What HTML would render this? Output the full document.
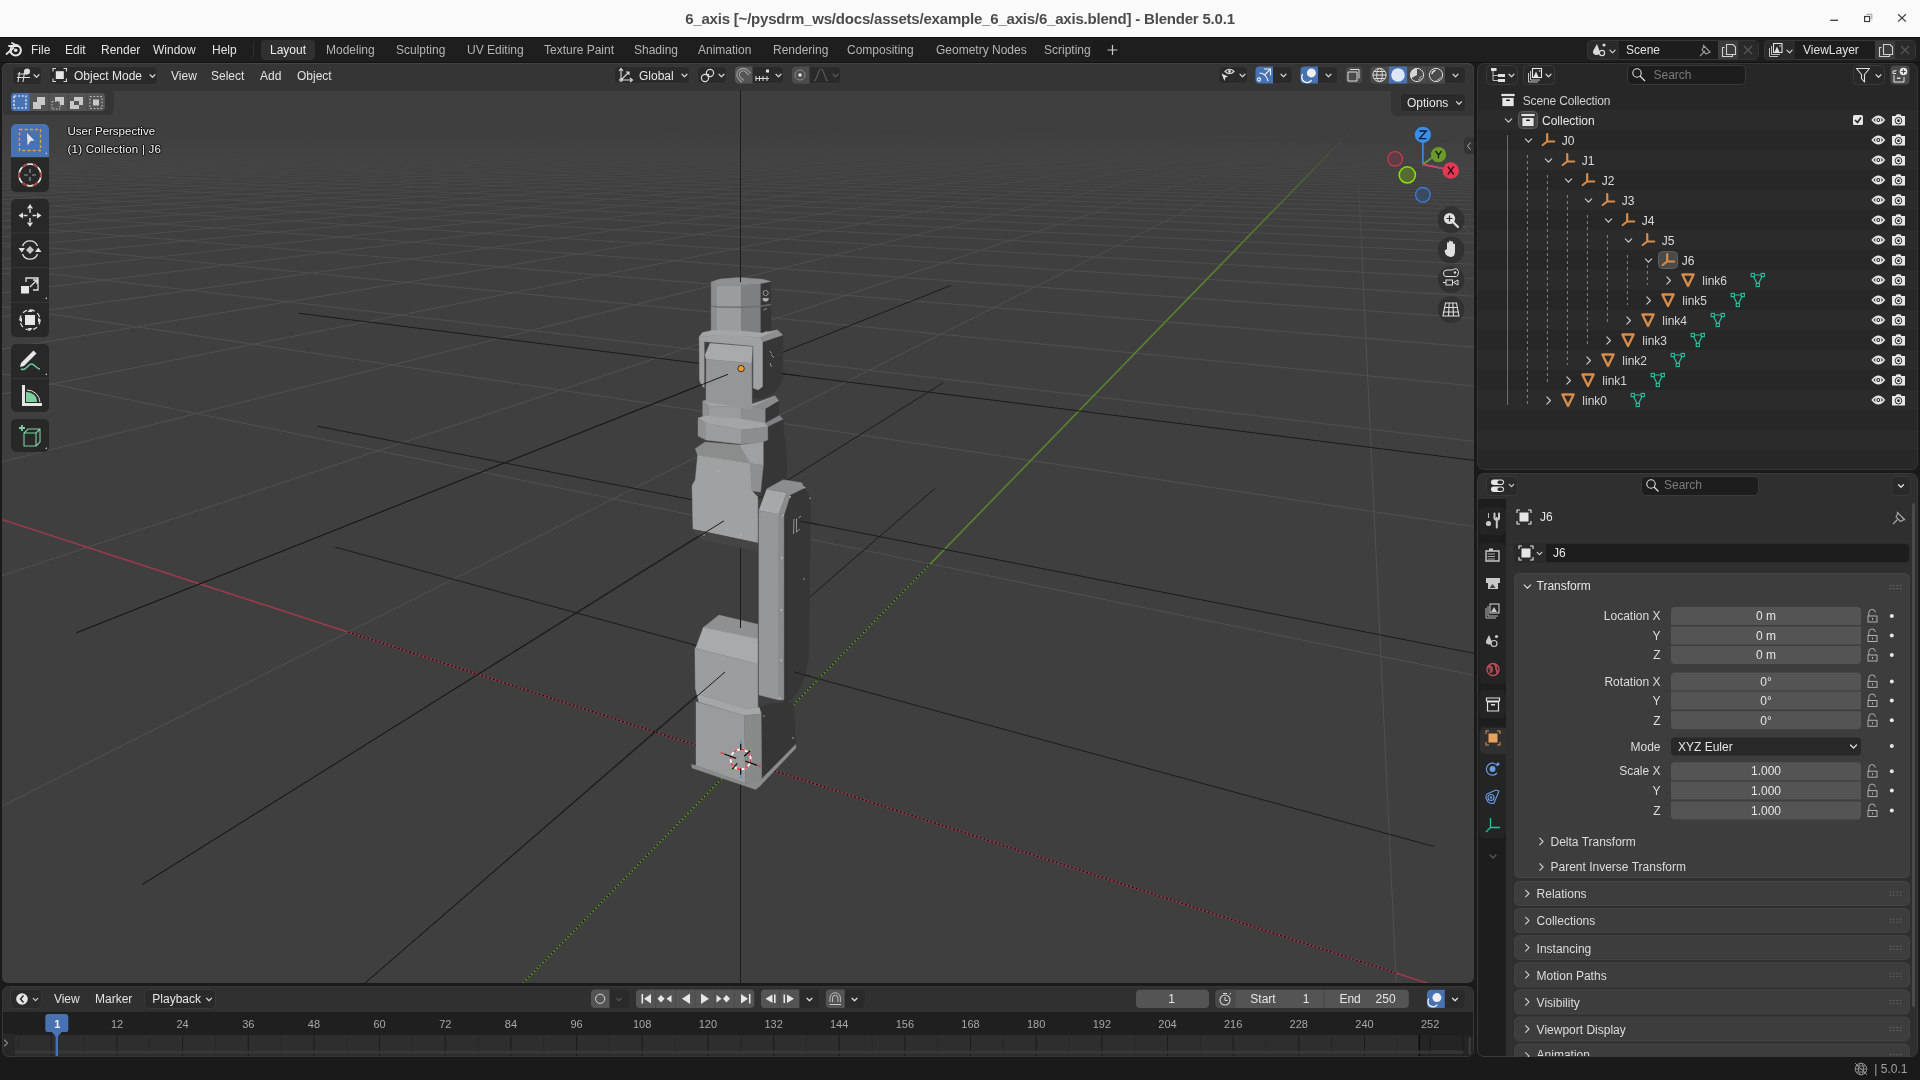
<!DOCTYPE html><html><head><meta charset="utf-8"><style>html,body{margin:0;padding:0;width:1920px;height:1080px;overflow:hidden;background:#1a1a1a;font-family:"Liberation Sans",sans-serif;}div{box-sizing:border-box}svg{display:block}</style></head><body><div style="position:absolute;left:0;top:0;width:1920px;height:1080px;overflow:hidden;will-change:transform">
<div style="position:absolute;left:0px;top:0px;width:1920px;height:37px;background:#fafafa;border-radius:0px;"></div>
<div style="position:absolute;left:0px;top:37px;width:1920px;height:1px;background:#0d0d0d;border-radius:0px;"></div>
<div style="position:absolute;left:560px;width:800px;top:10.30px;line-height:18px;font-size:15px;color:#4b4b4b;font-weight:bold;white-space:nowrap;text-align:center;letter-spacing:-0.2px">6_axis [~/pysdrm_ws/docs/assets/example_6_axis/6_axis.blend] - Blender 5.0.1</div>
<svg style="position:absolute;left:1820px;top:0px;overflow:visible;" width="100" height="37" viewBox="0 0 100 37"><path d="M10.2 20.3H18" stroke="#3c3c3c" stroke-width="1.3"/><rect x="44.6" y="16.5" width="5" height="5" fill="none" stroke="#3c3c3c" stroke-width="1.2"/><path d="M46.4 14.3H51.8V19.5" stroke="#9a9a9a" stroke-width="1" fill="none"/><path d="M78.1 14.3L85.9 21.6M85.9 14.3L78.1 21.6" stroke="#3c3c3c" stroke-width="1.2"/></svg>
<div style="position:absolute;left:0px;top:38px;width:1920px;height:24px;background:#1e1e1e;border-radius:0px;"></div>
<div style="position:absolute;left:0px;top:62px;width:1920px;height:1px;background:#121212;border-radius:0px;"></div>
<svg style="position:absolute;left:0px;top:0px;overflow:visible;" width="1920" height="1080" viewBox="0 0 1920 1080"><defs><clipPath id="vclip"><rect x="2" y="63" width="1472" height="920" rx="6"/></clipPath><linearGradient id="gfade" x1="0" y1="0" x2="0" y2="1080" gradientUnits="userSpaceOnUse"><stop offset="0.118" stop-color="#fff" stop-opacity="0"/><stop offset="0.139" stop-color="#fff" stop-opacity="0.2"/><stop offset="0.167" stop-color="#fff" stop-opacity="0.5"/><stop offset="0.2" stop-color="#fff" stop-opacity="0.75"/><stop offset="0.27" stop-color="#fff" stop-opacity="1"/></linearGradient><mask id="gmask" maskUnits="userSpaceOnUse" x="0" y="0" width="1920" height="1080"><rect x="0" y="0" width="1920" height="1080" fill="url(#gfade)"/></mask></defs><g clip-path="url(#vclip)"><rect x="2" y="63" width="1472" height="920" fill="#3f3f3f"/><g mask="url(#gmask)"><path d="M-1898306.6 23168.0L883.0 131.4M-6958.9 166.3L-3262370.2 23168.0M-1874840.6 23168.0L887.7 131.4M-6727.4 165.1L-3220720.4 23168.0M-1851374.6 23168.0L892.5 131.4M-6508.4 164.1L-3179070.5 23168.0M-1827908.5 23168.0L897.3 131.4M-6301.0 163.0L-3137420.7 23168.0M-1804442.5 23168.0L902.2 131.4M-6104.3 162.1L-3095770.8 23168.0M-1780976.5 23168.0L907.1 131.4M-5917.4 161.2L-3054121.0 23168.0M-1757510.5 23168.0L911.9 131.5M-5739.7 160.3L-3012471.2 23168.0M-1734044.4 23168.0L916.8 131.5M-5570.4 159.5L-2970821.3 23168.0M-1710578.4 23168.0L921.8 131.5M-5409.0 158.7L-2929171.5 23168.0M-1687112.4 23168.0L926.7 131.5M-5255.0 157.9L-2887521.6 23168.0M-1663646.3 23168.0L931.7 131.5M-5107.8 157.2L-2845871.8 23168.0M-1640180.3 23168.0L936.7 131.5M-4967.1 156.5L-2804222.0 23168.0M-1616714.3 23168.0L941.7 131.5M-4832.3 155.9L-2762572.1 23168.0M-1593248.2 23168.0L946.8 131.5M-4703.2 155.2L-2720922.3 23168.0M-1569782.2 23168.0L951.9 131.6M-4579.3 154.6L-2679272.4 23168.0M-1546316.2 23168.0L957.0 131.6M-4460.4 154.1L-2637622.6 23168.0M-1522850.1 23168.0L962.1 131.6M-4346.2 153.5L-2595972.8 23168.0M-1499384.1 23168.0L967.2 131.6M-4236.4 153.0L-2554322.9 23168.0M-1475918.1 23168.0L972.4 131.6M-4130.7 152.4L-2512673.1 23168.0M-1452452.0 23168.0L977.6 131.6M-4029.0 151.9L-2471023.2 23168.0M-1428986.0 23168.0L982.8 131.6M-3930.9 151.5L-2429373.4 23168.0M-1405520.0 23168.0L988.0 131.7M-3836.4 151.0L-2387723.6 23168.0M-1382053.9 23168.0L993.3 131.7M-3745.2 150.6L-2346073.7 23168.0M-1358587.9 23168.0L998.6 131.7M-3657.1 150.1L-2304423.9 23168.0M-1335121.9 23168.0L1003.9 131.7M-3572.0 149.7L-2262774.0 23168.0M-1311655.9 23168.0L1009.3 131.7M-3489.8 149.3L-2221124.2 23168.0M-1288189.8 23168.0L1014.6 131.7M-3410.2 148.9L-2179474.4 23168.0M-1264723.8 23168.0L1020.0 131.7M-3333.2 148.5L-2137824.5 23168.0M-1241257.8 23168.0L1025.5 131.8M-3258.7 148.2L-2096174.7 23168.0M-1217791.7 23168.0L1030.9 131.8M-3186.5 147.8L-2054524.8 23168.0M-1194325.7 23168.0L1036.4 131.8M-3116.6 147.5L-2012875.0 23168.0M-1170859.7 23168.0L1041.9 131.8M-3048.7 147.2L-1971225.2 23168.0M-1147393.6 23168.0L1047.4 131.8M-2982.9 146.8L-1929575.3 23168.0M-1123927.6 23168.0L1053.0 131.8M-2919.0 146.5L-1887925.5 23168.0M-1100461.6 23168.0L1058.6 131.9M-2857.0 146.2L-1846275.6 23168.0M-1076995.5 23168.0L1064.2 131.9M-2796.7 145.9L-1804625.8 23168.0M-1053529.5 23168.0L1069.8 131.9M-2738.2 145.6L-1762976.0 23168.0M-1030063.5 23168.0L1075.5 131.9M-2681.3 145.4L-1721326.1 23168.0M-1006597.4 23168.0L1081.2 131.9M-2625.9 145.1L-1679676.3 23168.0M-983131.4 23168.0L1086.9 131.9M-2572.0 144.8L-1638026.4 23168.0M-959665.4 23168.0L1092.7 131.9M-2519.6 144.6L-1596376.6 23168.0M-936199.4 23168.0L1098.4 132.0M-2468.5 144.3L-1554726.8 23168.0M-912733.3 23168.0L1104.3 132.0M-2418.8 144.1L-1513076.9 23168.0M-889267.3 23168.0L1110.1 132.0M-2370.4 143.8L-1471427.1 23168.0M-865801.3 23168.0L1116.0 132.0M-2323.2 143.6L-1429777.2 23168.0M-842335.2 23168.0L1121.9 132.0M-2277.1 143.4L-1388127.4 23168.0M-818869.2 23168.0L1127.8 132.0M-2232.2 143.2L-1346477.6 23168.0M-795403.2 23168.0L1133.8 132.1M-2188.4 143.0L-1304827.7 23168.0M-771937.1 23168.0L1139.8 132.1M-2145.7 142.7L-1263177.9 23168.0M-748471.1 23168.0L1145.8 132.1M-2104.0 142.5L-1221528.0 23168.0M-725005.1 23168.0L1151.8 132.1M-2063.2 142.3L-1179878.2 23168.0M-701539.0 23168.0L1157.9 132.1M-2023.4 142.1L-1138228.4 23168.0M-678073.0 23168.0L1164.0 132.1M-1984.5 142.0L-1096578.5 23168.0M-654607.0 23168.0L1170.2 132.2M-1946.6 141.8L-1054928.7 23168.0M-631140.9 23168.0L1176.4 132.2M-1909.4 141.6L-1013278.8 23168.0M-607674.9 23168.0L1182.6 132.2M-1873.1 141.4L-971629.0 23168.0M-584208.9 23168.0L1188.8 132.2M-1837.6 141.2L-929979.2 23168.0M-560742.8 23168.0L1195.1 132.2M-1802.8 141.1L-888329.3 23168.0M-537276.8 23168.0L1201.4 132.2M-1768.9 140.9L-846679.5 23168.0M-513810.8 23168.0L1207.7 132.3M-1735.6 140.7L-805029.6 23168.0M-490344.8 23168.0L1214.1 132.3M-1703.0 140.6L-763379.8 23168.0M-466878.7 23168.0L1220.5 132.3M-1671.1 140.4L-721729.9 23168.0M-443412.7 23168.0L1227.0 132.3M-1639.9 140.3L-680080.1 23168.0M-419946.7 23168.0L1233.4 132.3M-1609.3 140.1L-638430.3 23168.0M-396480.6 23168.0L1240.0 132.4M-1579.3 140.0L-596780.4 23168.0M-373014.6 23168.0L1246.5 132.4M-1549.9 139.8L-555130.6 23168.0M-349548.6 23168.0L1253.1 132.4M-1521.1 139.7L-513480.7 23168.0M-326082.5 23168.0L1259.7 132.4M-1492.9 139.6L-471830.9 23168.0M-302616.5 23168.0L1266.4 132.4M-1465.2 139.4L-430181.1 23168.0M-279150.5 23168.0L1273.1 132.4M-1438.1 139.3L-388531.2 23168.0M-255684.4 23168.0L1279.8 132.5M-1411.5 139.2L-346881.4 23168.0M-232218.4 23168.0L1286.5 132.5M-1385.3 139.0L-305231.5 23168.0M-208752.4 23168.0L1293.3 132.5M-1359.7 138.9L-263581.7 23168.0M-185286.3 23168.0L1300.2 132.5M-1334.5 138.8L-221931.9 23168.0M-161820.3 23168.0L1307.1 132.5M-1309.8 138.7L-180282.0 23168.0M-138354.3 23168.0L1314.0 132.6M-1285.6 138.5L-138632.2 23168.0M-114888.3 23168.0L1320.9 132.6M-1261.8 138.4L-96982.3 23168.0M-91422.2 23168.0L1327.9 132.6M-1238.4 138.3L-55332.5 23168.0M-67956.2 23168.0L1334.9 132.6M-1215.4 138.2L-13682.7 23168.0M-44490.2 23168.0L1342.0 132.6M-1192.8 138.1L27967.2 23168.0M2441.9 23168.0L1356.2 132.7M-1148.9 137.9L111266.9 23168.0M25907.9 23168.0L1363.4 132.7M-1127.4 137.8L152916.7 23168.0M49374.0 23168.0L1370.7 132.7M-1106.4 137.7L194566.5 23168.0M72840.0 23168.0L1377.9 132.7M-1085.7 137.6L236216.4 23168.0M96306.0 23168.0L1385.2 132.7M-1065.3 137.5L277866.2 23168.0M119772.1 23168.0L1392.6 132.8M-1045.3 137.4L319516.1 23168.0M143238.1 23168.0L1400.0 132.8M-1025.6 137.3L361165.9 23168.0M166704.1 23168.0L1407.4 132.8M-1006.2 137.2L402815.7 23168.0M190170.2 23168.0L1414.9 132.8M-987.2 137.1L444465.6 23168.0M213636.2 23168.0L1422.4 132.9M-968.4 137.0L486115.4 23168.0M237102.2 23168.0L1430.0 132.9M-949.9 136.9L527765.3 23168.0M260568.2 23168.0L1437.6 132.9M-931.8 136.8L569415.1 23168.0M284034.3 23168.0L1445.2 132.9M-913.9 136.7L611064.9 23168.0M307500.3 23168.0L1452.9 132.9M-896.3 136.6L652714.8 23168.0M330966.3 23168.0L1460.6 133.0M-878.9 136.6L694364.6 23168.0M354432.4 23168.0L1468.4 133.0M-861.9 136.5L736014.5 23168.0M377898.4 23168.0L1476.3 133.0M-845.1 136.4L777664.3 23168.0M401364.4 23168.0L1484.1 133.0M-828.5 136.3L819314.1 23168.0M424830.5 23168.0L1492.1 133.0M-812.2 136.2L860964.0 23168.0M448296.5 23168.0L1500.0 133.1M-796.1 136.2L902613.8 23168.0M471762.5 23168.0L1508.0 133.1M-780.3 136.1L944263.7 23168.0M495228.6 23168.0L1516.1 133.1M-764.7 136.0L985913.5 23168.0M518694.6 23168.0L1524.2 133.1M-749.3 135.9L1027563.3 23168.0M542160.6 23168.0L1532.4 133.2M-734.2 135.8L1069213.2 23168.0M565626.7 23168.0L1540.6 133.2M-719.2 135.8L1110863.0 23168.0M589092.7 23168.0L1548.8 133.2M-704.5 135.7L1152512.9 23168.0M612558.7 23168.0L1557.1 133.2M-690.0 135.6L1194162.7 23168.0M636024.8 23168.0L1565.5 133.2M-675.7 135.6L1235812.5 23168.0M659490.8 23168.0L1573.9 133.3M-661.5 135.5L1277462.4 23168.0M682956.8 23168.0L1582.4 133.3M-647.6 135.4L1319112.2 23168.0M706422.8 23168.0L1590.9 133.3M-633.9 135.4L1360762.1 23168.0M729888.9 23168.0L1599.4 133.3M-620.4 135.3L1402411.9 23168.0M753354.9 23168.0L1608.0 133.4M-607.0 135.2L1444061.7 23168.0M776820.9 23168.0L1616.7 133.4M-593.8 135.2L1485711.6 23168.0M800287.0 23168.0L1625.4 133.4M-580.8 135.1L1527361.4 23168.0M823753.0 23168.0L1634.2 133.4M-568.0 135.0L1569011.3 23168.0M847219.0 23168.0L1643.0 133.5M-555.3 135.0L1610661.1 23168.0M870685.1 23168.0L1651.9 133.5M-542.8 134.9L1652311.0 23168.0M894151.1 23168.0L1660.9 133.5M-530.5 134.9L1693960.8 23168.0M917617.1 23168.0L1669.9 133.5M-518.3 134.8L1735610.6 23168.0M941083.2 23168.0L1678.9 133.6M-506.3 134.7L1777260.5 23168.0M964549.2 23168.0L1688.0 133.6M-494.4 134.7L1818910.3 23168.0M988015.2 23168.0L1697.2 133.6M-482.7 134.6L1860560.2 23168.0M1011481.3 23168.0L1706.4 133.6M-471.1 134.6L1902210.0 23168.0M1034947.3 23168.0L1715.7 133.7M-459.7 134.5L1943859.8 23168.0M1058413.3 23168.0L1725.1 133.7M-448.4 134.5L1985509.7 23168.0M1081879.3 23168.0L1734.5 133.7M-437.3 134.4L2027159.5 23168.0M1105345.4 23168.0L1743.9 133.7M-426.3 134.3L2068809.4 23168.0M1128811.4 23168.0L1753.4 133.8M-415.4 134.3L2110459.2 23168.0M1152277.4 23168.0L1763.0 133.8M-404.7 134.2L2152109.0 23168.0M1175743.5 23168.0L1772.7 133.8M-394.0 134.2L2193758.9 23168.0M1199209.5 23168.0L1782.4 133.8M-383.6 134.1L2235408.7 23168.0M1222675.5 23168.0L1792.2 133.9M-373.2 134.1L2277058.6 23168.0M1246141.6 23168.0L1802.0 133.9M-363.0 134.0L2318708.4 23168.0M1269607.6 23168.0L1811.9 133.9M-352.9 134.0L2360358.2 23168.0M1293073.6 23168.0L1821.9 133.9M-342.9 133.9L2402008.1 23168.0M1316539.7 23168.0L1831.9 134.0M-333.0 133.9L2443657.9 23168.0M1340005.7 23168.0L1842.0 134.0M-323.2 133.8L2485307.8 23168.0M1363471.7 23168.0L1852.2 134.0M-313.6 133.8L2526957.6 23168.0M1386937.8 23168.0L1862.4 134.1M-304.0 133.7L2568607.4 23168.0M1410403.8 23168.0L1872.7 134.1M-294.6 133.7L2610257.3 23168.0M1433869.8 23168.0L1883.1 134.1M-285.2 133.7L2651907.1 23168.0M1457335.9 23168.0L1893.6 134.1M-276.0 133.6L2693557.0 23168.0M1480801.9 23168.0L1904.1 134.2M-266.9 133.6L2735206.8 23168.0M1504267.9 23168.0L1914.7 134.2M-257.9 133.5L2776856.6 23168.0M1527733.9 23168.0L1925.3 134.2M-249.0 133.5L2818506.5 23168.0M1551200.0 23168.0L1936.1 134.3M-240.1 133.4L2860156.3 23168.0M1574666.0 23168.0L1946.9 134.3M-231.4 133.4L2901806.2 23168.0M1598132.0 23168.0L1957.8 134.3M-222.8 133.3L2943456.0 23168.0M1621598.1 23168.0L1968.7 134.3M-214.2 133.3L2985105.8 23168.0M1645064.1 23168.0L1979.8 134.4M-205.8 133.3L3026755.7 23168.0M1668530.1 23168.0L1990.9 134.4M-197.4 133.2L3068405.5 23168.0M1691996.2 23168.0L2002.1 134.4M-189.2 133.2L3110055.4 23168.0M1715462.2 23168.0L2013.3 134.5M-181.0 133.1L3151705.2 23168.0M1738928.2 23168.0L2024.7 134.5M-172.9 133.1L3193355.0 23168.0M1762394.3 23168.0L2036.1 134.5M-164.9 133.1L3235004.9 23168.0M1785860.3 23168.0L2047.6 134.6M-157.0 133.0L3276654.7 23168.0M1809326.3 23168.0L2059.2 134.6M-149.1 133.0L3318304.6 23168.0M1832792.4 23168.0L2070.9 134.6M-141.4 133.0L3359954.4 23168.0M1856258.4 23168.0L2082.6 134.7M-133.7 132.9L3401604.2 23168.0" stroke="#505050" stroke-width="1" fill="none"/><path d="M-1189.4 131.9L69617.0 23168.0" stroke="#9a3b4b" stroke-width="1.6" fill="none"/><path d="M-21024.1 23168.0L1352.5 129.2" stroke="#58842c" stroke-width="1.6" fill="none"/></g><path d="M299.0 313.3L1534.0 467.9" stroke="#1c1c1c" stroke-width="1" fill="none"/><path d="M76.8 632.7L950.8 285.5" stroke="#1c1c1c" stroke-width="1" fill="none"/><path d="M317.4 426.2L1534.0 665.1" stroke="#1c1c1c" stroke-width="1" fill="none"/><path d="M142.3 884.5L943.3 382.6" stroke="#1c1c1c" stroke-width="1" fill="none"/><path d="M335.3 547.2L1433.8 846.4" stroke="#1c1c1c" stroke-width="1" fill="none"/><path d="M325.1 1017.7L935.0 488.4" stroke="#1c1c1c" stroke-width="1" fill="none"/><path d="M740.5 60.0L740.5 990.0" stroke="#1c1c1c" stroke-width="1" fill="none"/><path d="M348.2 632.1L1395.9 973.0M242.7 1271.8L930.3 563.8" stroke="#111" stroke-width="1.2" stroke-dasharray="2 2" fill="none"/><polygon points="786.0,492.0 804.4,488.0 808.9,495.0 810.6,506.0 808.3,660.0 805.0,676.0 799.0,689.0 791.0,700.0 783.0,704.0 783.9,515.6" fill="#373637" stroke="#373637" stroke-width="0.4"/><polygon points="760.4,283.7 770.7,281.5 771.0,334.0 760.4,337.0" fill="#373637" stroke="#373637" stroke-width="0.4"/><polygon points="711.1,281.9 717.0,285.6 717.0,336.0 711.1,333.0" fill="#8b8c8d" stroke="#8b8c8d" stroke-width="0.4"/><polygon points="717.0,285.6 741.5,285.2 741.5,337.0 717.0,336.0" fill="#9b9c9d" stroke="#9b9c9d" stroke-width="0.4"/><polygon points="741.5,285.2 760.4,283.7 760.4,337.0 741.5,337.0" fill="#7e7f80" stroke="#7e7f80" stroke-width="0.4"/><polygon points="711.1,281.9 720.0,279.0 739.3,277.4 763.0,279.3 770.7,281.5 760.4,283.7 741.5,285.2 717.0,285.6" fill="#8f9091" stroke="#8f9091" stroke-width="0.4"/><polygon points="711.1,305.5 717.0,306.5 741.5,306.8 760.4,305.8 770.7,304.0 770.7,305.0 760.4,306.8 741.5,307.8 717.0,307.5 711.1,306.5" fill="#6e6f70" stroke="#6e6f70" stroke-width="0.4"/><polygon points="762.5,342.0 773.3,331.7 778.3,330.8 782.9,335.0 782.9,378.3 779.0,387.0 773.3,393.3 762.5,398.3 752.0,398.0 752.0,386.0" fill="#373637" stroke="#373637" stroke-width="0.4"/><polygon points="704.2,341.5 753.3,346.0 753.3,400.0 704.2,395.0" fill="#3e3e3e" stroke="#3e3e3e" stroke-width="0.4"/><polygon points="760.0,337.5 777.5,330.0 782.9,335.0 762.5,342.0" fill="#8e8f90" stroke="#8e8f90" stroke-width="0.4"/><polygon points="699.2,336.7 702.5,332.5 711.7,330.4 741.0,331.0 762.0,333.0 777.5,330.0 760.0,337.5 741.0,336.0 716.0,335.4" fill="#a5a6a7" stroke="#a5a6a7" stroke-width="0.4"/><polygon points="699.2,336.7 716.0,335.4 741.0,336.0 760.0,337.5 762.5,342.0 753.3,346.0 704.2,341.5 699.2,340.0" fill="#a0a1a2" stroke="#a0a1a2" stroke-width="0.4"/><polygon points="699.2,338.0 704.2,341.5 704.2,388.0 701.0,384.0 699.5,380.0" fill="#9e9fa0" stroke="#9e9fa0" stroke-width="0.4"/><polygon points="753.3,342.0 762.5,342.0 762.5,386.7 758.0,390.0 753.3,388.0" fill="#a0a1a2" stroke="#a0a1a2" stroke-width="0.4"/><polygon points="753.0,406.3 775.2,395.9 778.9,401.1 765.2,409.3" fill="#8a8b8c" stroke="#8a8b8c" stroke-width="0.4"/><polygon points="765.2,409.3 778.9,401.1 778.9,414.4 765.2,422.6" fill="#373637" stroke="#373637" stroke-width="0.4"/><polygon points="702.7,401.0 707.8,400.0 741.0,402.5 753.0,403.8 775.2,395.9 753.0,406.3 741.0,407.0 708.7,406.0" fill="#a2a3a4" stroke="#a2a3a4" stroke-width="0.4"/><polygon points="702.7,401.0 708.7,406.0 708.7,424.0 702.7,421.0" fill="#8f9091" stroke="#8f9091" stroke-width="0.4"/><polygon points="708.7,406.0 741.0,407.0 741.0,425.0 708.7,424.0" fill="#9a9b9c" stroke="#9a9b9c" stroke-width="0.4"/><polygon points="741.0,407.0 753.0,406.3 765.2,409.3 765.2,424.8 741.0,425.0" fill="#8d8e8f" stroke="#8d8e8f" stroke-width="0.4"/><polygon points="710.0,343.3 752.5,346.7 751.7,363.3 706.2,359.2 705.0,355.0" fill="#a9aaab" stroke="#a9aaab" stroke-width="0.4"/><polygon points="706.2,359.2 751.7,363.3 752.0,409.5 706.0,401.5" fill="#959697" stroke="#959697" stroke-width="0.4"/><polygon points="765.2,423.3 779.6,415.6 783.3,419.6 767.8,427.0" fill="#7f8081" stroke="#7f8081" stroke-width="0.4"/><polygon points="767.8,427.0 783.3,419.6 783.3,432.2 767.8,440.4" fill="#373637" stroke="#373637" stroke-width="0.4"/><polygon points="698.0,418.0 706.0,415.8 741.0,419.0 765.2,423.3 767.8,427.0 741.0,430.0 706.0,423.0" fill="#a4a5a6" stroke="#a4a5a6" stroke-width="0.4"/><polygon points="698.0,418.0 706.0,423.0 706.0,440.0 698.0,436.0" fill="#8f9090" stroke="#8f9090" stroke-width="0.4"/><polygon points="706.0,423.0 741.0,430.0 741.0,444.0 706.0,440.0" fill="#9c9d9e" stroke="#9c9d9e" stroke-width="0.4"/><polygon points="741.0,430.0 767.8,427.0 767.8,441.9 741.0,444.0" fill="#8c8d8e" stroke="#8c8d8e" stroke-width="0.4"/><polygon points="763.3,442.0 767.8,440.4 783.3,432.2 786.0,445.0 787.0,470.0 787.0,500.0 761.7,500.0" fill="#373637" stroke="#373637" stroke-width="0.4"/><polygon points="695.3,448.7 705.0,442.0 739.3,445.0 750.4,463.5 697.6,455.2" fill="#8b8c8c" stroke="#8b8c8c" stroke-width="0.4"/><polygon points="739.3,445.0 763.3,442.0 763.3,465.4 750.4,463.5" fill="#9fa0a1" stroke="#9fa0a1" stroke-width="0.4"/><polygon points="697.6,455.2 750.4,463.5 752.0,491.0 757.8,497.0 757.8,543.1 693.0,529.3 692.0,485.7 695.3,479.7" fill="#a0a1a2" stroke="#a0a1a2" stroke-width="0.4"/><polygon points="750.4,463.5 763.3,465.4 760.5,492.0 752.0,491.0" fill="#8e8f90" stroke="#8e8f90" stroke-width="0.4"/><polygon points="693.0,529.3 757.8,543.1 757.8,551.5 702.2,539.9" fill="#454545" stroke="#454545" stroke-width="0.4"/><polygon points="703.3,627.4 718.9,615.1 757.8,624.2 757.8,638.8" fill="#8f9091" stroke="#8f9091" stroke-width="0.4"/><polygon points="695.6,648.2 703.3,627.4 757.8,638.8 757.8,664.0" fill="#a9aaab" stroke="#a9aaab" stroke-width="0.4"/><polygon points="694.9,648.2 757.8,664.0 757.8,707.5 745.6,708.8 700.6,695.0 695.3,688.0" fill="#9c9d9e" stroke="#9c9d9e" stroke-width="0.4"/><polygon points="759.4,707.5 770.0,703.8 793.3,702.0 795.6,744.4 761.7,779.0 761.2,713.8" fill="#373637" stroke="#373637" stroke-width="0.4"/><polygon points="695.3,688.0 700.6,695.0 745.6,708.8 759.4,707.5 761.2,713.8 744.4,715.6 698.8,701.9" fill="#a5a6a7" stroke="#a5a6a7" stroke-width="0.4"/><polygon points="696.0,701.7 744.4,715.6 745.6,783.3 696.0,765.6" fill="#9a9b9c" stroke="#9a9b9c" stroke-width="0.4"/><polygon points="744.4,715.6 761.2,713.8 761.7,778.9 745.6,783.3" fill="#888989" stroke="#888989" stroke-width="0.4"/><polygon points="691.7,764.4 696.0,765.6 745.6,783.3 761.7,778.9 795.6,744.4 796.0,748.0 760.0,786.0 755.6,789.4 692.0,768.0" fill="#8a8b8c" stroke="#8a8b8c" stroke-width="0.4"/><polygon points="758.9,511.0 778.9,514.0 778.9,700.0 758.9,695.0" fill="#969798" stroke="#969798" stroke-width="0.4"/><polygon points="778.9,514.0 783.9,515.6 783.9,700.0 778.9,700.0" fill="#8b8c8d" stroke="#8b8c8d" stroke-width="0.4"/><polygon points="758.9,510.6 766.7,489.2 786.7,492.8 778.9,513.9" fill="#a7a8a9" stroke="#a7a8a9" stroke-width="0.4"/><polygon points="786.7,492.8 790.0,496.1 783.9,515.6 778.9,513.9" fill="#8a8b8c" stroke="#8a8b8c" stroke-width="0.4"/><polygon points="767.8,488.3 783.3,479.7 801.7,482.8 804.4,488.0 789.0,495.6 786.7,492.8 766.7,489.2" fill="#8c8d8e" stroke="#8c8d8e" stroke-width="0.4"/><g fill="none" stroke="#c8c8c8" stroke-width="0.8" opacity="0.8"><circle cx="765.6" cy="293" r="2.6"/><path d="M762.8 298.5H768.4A2.8 2.8 0 0 1 762.8 298.5Z" fill="#d0d0d0"/><path d="M763.5 310L767 308.5M764 333L767 331M769.5 351L772 354M771 355L774 357.5M770 363L771.5 367M794 519L793.5 534M796.5 518.5V532L800 529M798.5 518L801 516"/></g><g fill="#c8c8c8" opacity="0.8"><circle cx="782.8" cy="515.4" r="0.9"/><circle cx="790.2" cy="496.9" r="0.9"/><circle cx="804.5" cy="487.6" r="0.8"/><circle cx="810" cy="498.2" r="0.8"/><circle cx="782" cy="558" r="0.9"/><circle cx="781.1" cy="610" r="0.9"/><circle cx="781" cy="660.5" r="0.9"/><circle cx="779.8" cy="698" r="0.9"/><circle cx="804" cy="579" r="0.7"/><circle cx="704" cy="535" r="0.8"/><circle cx="741" cy="535" r="0.8"/><circle cx="718" cy="471" r="0.8"/><circle cx="764" cy="716" r="0.7"/><circle cx="793" cy="738" r="0.8"/></g><path d="M728.0 374.3L76.8 632.7" stroke="#1c1c1c" stroke-width="1" fill="none"/><path d="M724.0 520.8L142.3 884.5" stroke="#1c1c1c" stroke-width="1" fill="none"/><path d="M725.0 672.0L365.1 983.0" stroke="#1c1c1c" stroke-width="1" fill="none"/><path d="M781.5 373.5L800.0 375.8" stroke="#1c1c1c" stroke-width="1" fill="none"/><path d="M799.4 521.0L820.0 525.0" stroke="#1c1c1c" stroke-width="1" fill="none"/><path d="M794.0 672.0L810.0 676.4" stroke="#1c1c1c" stroke-width="1" fill="none"/><path d="M740.5 60.0L740.5 282.0" stroke="#1c1c1c" stroke-width="1" fill="none"/><path d="M740.5 551.5L740.5 628.0" stroke="#1c1c1c" stroke-width="1" fill="none"/><path d="M740.5 785.0L740.5 990.0" stroke="#1c1c1c" stroke-width="1" fill="none"/><circle cx="741.1" cy="368.6" r="3.2" fill="#f59a23" stroke="#1a1a1a" stroke-width="0.8"/><g transform="translate(740.7,759.3)"><circle r="10" fill="none" stroke="#fff" stroke-width="1.7"/><circle r="10" fill="none" stroke="#e8323a" stroke-width="1.7" stroke-dasharray="3.9 3.95"/><path d="M0 -15.5V-9M0 9V15.5M-16.5 -5.3L-4.5 -1M4.5 1.7L16.5 6M-8.5 10L-3.5 4M3.5 -3L9.5 -8.5" stroke="#111" stroke-width="1.3"/><path d="M0 -19V-15.5M0 15.5V19" stroke="#4a8ae0" stroke-width="1.3"/><path d="M-17 -5.6L-20 -6.7M17 6.2L20 7.3" stroke="#e8323a" stroke-width="1.3"/><path d="M-8.5 10L-10 11.5M9.5 -8.5L11 -10" stroke="#7ac030" stroke-width="1.3"/></g></g></svg>
<svg style="position:absolute;left:0px;top:0px;overflow:visible;" width="1920" height="80" viewBox="0 0 1920 80"><g transform="translate(14.5,49.5)"><circle cx="1.2" cy="0.8" r="5.2" fill="none" stroke="#e6e6e6" stroke-width="2"/><circle cx="1.2" cy="0.8" r="1.8" fill="#e6e6e6"/><path d="M-8 4.5L-1 -1.5M-5.5 -3.5H2.5M-2.5 -6.5L4 -3" stroke="#e6e6e6" stroke-width="1.8" stroke-linecap="round"/></g><rect x="253" y="42" width="1" height="16" fill="#2e2e2e"/><rect x="261" y="40" width="54" height="20" rx="4" fill="#303030"/><rect x="1092" y="40" width="28" height="20" rx="4" fill="#1b1b1b"/><path d="M1112.5 45V55M1107.5 50H1117.5" stroke="#c8c8c8" stroke-width="1.2"/><rect x="1587.5" y="40.5" width="171" height="19" rx="4" fill="#2a2a2a" stroke="#363636" stroke-width="1"/><rect x="1619" y="41" width="99" height="18" fill="#1d1d1d"/><rect x="1718" y="41" width="20" height="18" fill="#3c3c3c"/><rect x="1738" y="41" width="20" height="18" fill="#2a2a2a"/><path d="M1597 44 L1593 51 A3.5 3.5 0 0 0 1600 52 Z" fill="#d8d8d8"/><circ cx="1604" cy="45" r="1.5"/><circle cx="1604" cy="45" r="1.6" fill="#d8d8d8"/><circle cx="1602" cy="53" r="2.6" fill="none" stroke="#d8d8d8" stroke-width="1.2"/><path d="M1609.9 50.2L1612.5 52.8L1615.1 50.2" stroke="#cfcfcf" stroke-width="1.2" fill="none" stroke-linecap="round" stroke-linejoin="round"/><path d="M1700 56L1705 51M1703 45L1710 52M1704 46L1702 50L1706 54L1710 52Z" stroke="#9a9a9a" stroke-width="1.1" fill="none"/><path d="M1744 46L1752 54M1752 46L1744 54" stroke="#5a5a5a" stroke-width="1.1"/><rect x="1764.5" y="40.5" width="151" height="19" rx="4" fill="#2a2a2a" stroke="#363636" stroke-width="1"/><rect x="1795" y="41" width="80" height="18" fill="#1d1d1d"/><rect x="1875" y="41" width="20" height="18" fill="#3c3c3c"/><rect x="1895" y="41" width="20" height="18" fill="#2a2a2a"/><path d="M1901 46L1909 54M1909 46L1901 54" stroke="#5a5a5a" stroke-width="1.1"/><path d="M1726.5 44.5H1733L1735.5 47V54.5H1726.5Z" fill="none" stroke="#d0d0d0" stroke-width="1.1"/><path d="M1724.5 47.5H1722.5V56.5H1732.5V54.5" fill="none" stroke="#d0d0d0" stroke-width="1.1"/><path d="M1883.5 44.5H1890L1892.5 47V54.5H1883.5Z" fill="none" stroke="#d0d0d0" stroke-width="1.1"/><path d="M1881.5 47.5H1879.5V56.5H1889.5V54.5" fill="none" stroke="#d0d0d0" stroke-width="1.1"/><path d="M1769.5 48V56.5H1778M1771.5 46V54.5H1780" fill="none" stroke="#d0d0d0" stroke-width="0.9"/><rect x="1773.5" y="43.5" width="8.5" height="9" fill="none" stroke="#e0e0e0" stroke-width="1.1"/><path d="M1774.5 52L1777 46.5L1779.5 52Z" fill="#e0e0e0"/><circle cx="1780" cy="46" r="0.8" fill="#e0e0e0"/><path d="M1786.9 50.2L1789.5 52.8L1792.1 50.2" stroke="#cfcfcf" stroke-width="1.2" fill="none" stroke-linecap="round" stroke-linejoin="round"/></svg>
<div style="position:absolute;left:31px;top:43.34px;line-height:14px;font-size:12px;color:#e2e2e2;font-weight:normal;white-space:nowrap;">File</div>
<div style="position:absolute;left:65px;top:43.34px;line-height:14px;font-size:12px;color:#e2e2e2;font-weight:normal;white-space:nowrap;">Edit</div>
<div style="position:absolute;left:101px;top:43.34px;line-height:14px;font-size:12px;color:#e2e2e2;font-weight:normal;white-space:nowrap;">Render</div>
<div style="position:absolute;left:153px;top:43.34px;line-height:14px;font-size:12px;color:#e2e2e2;font-weight:normal;white-space:nowrap;">Window</div>
<div style="position:absolute;left:212px;top:43.34px;line-height:14px;font-size:12px;color:#e2e2e2;font-weight:normal;white-space:nowrap;">Help</div>
<div style="position:absolute;left:270px;top:43.34px;line-height:14px;font-size:12px;color:#ececec;font-weight:normal;white-space:nowrap;">Layout</div>
<div style="position:absolute;left:326px;top:43.34px;line-height:14px;font-size:12px;color:#b4b4b4;font-weight:normal;white-space:nowrap;">Modeling</div>
<div style="position:absolute;left:396px;top:43.34px;line-height:14px;font-size:12px;color:#b4b4b4;font-weight:normal;white-space:nowrap;">Sculpting</div>
<div style="position:absolute;left:467px;top:43.34px;line-height:14px;font-size:12px;color:#b4b4b4;font-weight:normal;white-space:nowrap;">UV Editing</div>
<div style="position:absolute;left:544px;top:43.34px;line-height:14px;font-size:12px;color:#b4b4b4;font-weight:normal;white-space:nowrap;">Texture Paint</div>
<div style="position:absolute;left:634px;top:43.34px;line-height:14px;font-size:12px;color:#b4b4b4;font-weight:normal;white-space:nowrap;">Shading</div>
<div style="position:absolute;left:698px;top:43.34px;line-height:14px;font-size:12px;color:#b4b4b4;font-weight:normal;white-space:nowrap;">Animation</div>
<div style="position:absolute;left:773px;top:43.34px;line-height:14px;font-size:12px;color:#b4b4b4;font-weight:normal;white-space:nowrap;">Rendering</div>
<div style="position:absolute;left:847px;top:43.34px;line-height:14px;font-size:12px;color:#b4b4b4;font-weight:normal;white-space:nowrap;">Compositing</div>
<div style="position:absolute;left:936px;top:43.34px;line-height:14px;font-size:12px;color:#b4b4b4;font-weight:normal;white-space:nowrap;">Geometry Nodes</div>
<div style="position:absolute;left:1044px;top:43.34px;line-height:14px;font-size:12px;color:#b4b4b4;font-weight:normal;white-space:nowrap;">Scripting</div>
<div style="position:absolute;left:1626px;top:43.34px;line-height:14px;font-size:12px;color:#e2e2e2;font-weight:normal;white-space:nowrap;">Scene</div>
<div style="position:absolute;left:1803px;top:43.34px;line-height:14px;font-size:12px;color:#e2e2e2;font-weight:normal;white-space:nowrap;">ViewLayer</div>
<div style="position:absolute;left:2px;top:63px;width:1472px;height:28px;background:#353535;border-radius:0px;border-top-left-radius:6px;border-top-right-radius:6px;border-top:1px solid #454545;border-left:1px solid #3e3e3e;border-right:1px solid #3e3e3e"></div>
<div style="position:absolute;left:2px;top:91px;width:112px;height:24px;background:#353535;border-radius:0px;border-bottom-right-radius:6px;border-left:1px solid #3e3e3e"></div>
<div style="position:absolute;left:1391px;top:91px;width:83px;height:25px;background:#353535;border-radius:0px;border-bottom-left-radius:6px;border-right:1px solid #3e3e3e"></div>
<svg style="position:absolute;left:0px;top:0px;overflow:visible;" width="1920" height="130" viewBox="0 0 1920 130"><rect x="12.5" y="66.5" width="29" height="18" rx="4" fill="#2a2a2a" stroke="#383838" stroke-width="1"/><g stroke="#dcdcdc" stroke-width="1.1" fill="none"><path d="M17 77.5H30M17.5 74H27M19.5 72L18 82M24.5 72L23 82"/></g><circle cx="27" cy="71.5" r="3" fill="#dcdcdc"/><path d="M34.0 74.75L36.5 77.25L39.0 74.75" stroke="#cfcfcf" stroke-width="1.2" fill="none" stroke-linecap="round" stroke-linejoin="round"/><rect x="49.5" y="66.5" width="108" height="18" rx="4" fill="#2a2a2a" stroke="#383838" stroke-width="1"/><path d="M53 71.5V68.5H56M63.5 68.5H66.5V71.5M66.5 78.5V81.5H63.5M56 81.5H53V78.5" stroke="#dcdcdc" stroke-width="1.1" fill="none"/><rect x="55.8" y="71.2" width="8" height="7.8" fill="#e6e6e6"/><path d="M150.0 74.75L152.5 77.25L155.0 74.75" stroke="#cfcfcf" stroke-width="1.2" fill="none" stroke-linecap="round" stroke-linejoin="round"/><rect x="614.5" y="66.5" width="75" height="17" rx="4" fill="#2a2a2a" stroke="#383838" stroke-width="1"/><g stroke="#d8d8d8" stroke-width="1.1" fill="none"><path d="M621 69V80H632M619 71L621 68.5L623 71M630 78L632.5 80L630 82M621 80L629 72M626 72H629V75"/><circle cx="621" cy="80" r="1.3"/></g><path d="M682.0 74.25L684.5 76.75L687.0 74.25" stroke="#cfcfcf" stroke-width="1.2" fill="none" stroke-linecap="round" stroke-linejoin="round"/><rect x="697.5" y="66.5" width="29" height="17" rx="4" fill="#2a2a2a" stroke="#383838" stroke-width="1"/><g stroke="#d8d8d8" stroke-width="1.2" fill="none"><circle cx="705" cy="78" r="3.6"/><circle cx="710" cy="73" r="3.6"/></g><circle cx="708" cy="75" r="1.2" fill="#d8d8d8"/><path d="M719.0 74.25L721.5 76.75L724.0 74.25" stroke="#cfcfcf" stroke-width="1.2" fill="none" stroke-linecap="round" stroke-linejoin="round"/><rect x="734.5" y="66.5" width="49" height="17" rx="4" fill="#2a2a2a" stroke="#383838" stroke-width="1"/><path d="M735 70.5A4 4 0 0 1 739 66.5H752.5V83.5H739A4 4 0 0 1 735 79.5Z" fill="#545454"/><g transform="rotate(-45 743.5 75)"><path d="M738.5 79V74.5A5 5 0 0 1 748.5 74.5V79" stroke="#a0a0a0" stroke-width="3.6" fill="none"/><path d="M738.5 79.5V74.5A5 5 0 0 1 748.5 74.5V79.5" stroke="#545454" stroke-width="1.4" fill="none"/></g><g stroke="#d8d8d8" stroke-width="1" fill="none"><path d="M755.5 78.5H769M756 76V81M759.5 76V81M763 76V81M767 76V81"/></g><rect x="766" y="69.5" width="3" height="3" fill="#e0e0e0"/><path d="M776.0 74.25L778.5 76.75L781.0 74.25" stroke="#cfcfcf" stroke-width="1.2" fill="none" stroke-linecap="round" stroke-linejoin="round"/><rect x="791.5" y="66.5" width="49" height="17" rx="4" fill="#2a2a2a" stroke="#383838" stroke-width="1"/><path d="M792 70.5A4 4 0 0 1 796 66.5H809.5V83.5H796A4 4 0 0 1 792 79.5Z" fill="#4c4c4c"/><circle cx="800" cy="75" r="5" fill="none" stroke="#8a8a8a" stroke-width="1"/><circle cx="800" cy="75" r="1.8" fill="#e6e6e6"/><path d="M814 81C817 81 818 69 821 69C824 69 825 81 828 81" stroke="#5c5c5c" stroke-width="1.1" fill="none"/><path d="M833.0 74.25L835.5 76.75L838.0 74.25" stroke="#555" stroke-width="1.2" fill="none" stroke-linecap="round" stroke-linejoin="round"/><rect x="1218.5" y="66.5" width="29" height="17" rx="4" fill="#2a2a2a" stroke="#383838" stroke-width="1"/><path d="M1221.5 73.5L1228 76.5L1225.5 77.5L1224.5 81Z" fill="#dcdcdc"/><path d="M1225 71.5Q1229.5 67 1234 71.5Q1229.5 76 1225 71.5Z" fill="none" stroke="#dcdcdc" stroke-width="1.1"/><circle cx="1229.5" cy="71.5" r="1.4" fill="#dcdcdc"/><path d="M1240.0 74.25L1242.5 76.75L1245.0 74.25" stroke="#cfcfcf" stroke-width="1.2" fill="none" stroke-linecap="round" stroke-linejoin="round"/><rect x="1255.5" y="66.5" width="37" height="17" rx="4" fill="#2a2a2a" stroke="#383838" stroke-width="1"/><path d="M1255.5 70.5A4 4 0 0 1 1259.5 66.5H1273V83.5H1259.5A4 4 0 0 1 1255.5 79.5Z" fill="#4772b3"/><g stroke="#f0f0f0" stroke-width="1.1" fill="none"><path d="M1259.5 73Q1266 73 1268 81M1264 69H1270.5V75.5M1270.5 69L1265 74.5"/><circle cx="1259" cy="79.5" r="1.6"/></g><path d="M1281.0 74.25L1283.5 76.75L1286.0 74.25" stroke="#cfcfcf" stroke-width="1.2" fill="none" stroke-linecap="round" stroke-linejoin="round"/><rect x="1300.5" y="66.5" width="37" height="17" rx="4" fill="#2a2a2a" stroke="#383838" stroke-width="1"/><path d="M1300.5 70.5A4 4 0 0 1 1304.5 66.5H1318V83.5H1304.5A4 4 0 0 1 1300.5 79.5Z" fill="#4772b3"/><path d="M1302.6 74.2A5.2 5.2 0 0 0 1311.6 80.2" stroke="#f0f0f0" stroke-width="1.4" fill="none"/><circle cx="1311.4" cy="72.9" r="4.5" fill="#f0f0f0"/><path d="M1326.0 74.25L1328.5 76.75L1331.0 74.25" stroke="#cfcfcf" stroke-width="1.2" fill="none" stroke-linecap="round" stroke-linejoin="round"/><rect x="1345.5" y="66.5" width="17" height="17" rx="4" fill="#4a4a4a" stroke="#383838" stroke-width="1"/><path d="M1350 69.5H1359V78.5M1348 72H1357V81H1348Z" fill="none" stroke="#dcdcdc" stroke-width="1"/><rect x="1370.5" y="66.5" width="95" height="17" rx="4" fill="#2a2a2a" stroke="#383838" stroke-width="1"/><path d="M1370.5 70.5A4 4 0 0 1 1374.5 66.5H1445V83.5H1374.5A4 4 0 0 1 1370.5 79.5Z" fill="#4a4a4a"/><rect x="1389" y="66.5" width="18.5" height="17" fill="#4772b3"/><rect x="1407.5" y="66.5" width="0.8" height="17" fill="#3a3a3a"/><rect x="1426.5" y="66.5" width="0.8" height="17" fill="#3a3a3a"/><g stroke="#dcdcdc" stroke-width="1" fill="none"><circle cx="1379.5" cy="75" r="6.6"/><ellipse cx="1379.5" cy="75" rx="2.8" ry="6.6"/><path d="M1373 75H1386M1374 71.5H1385M1374 78.5H1385"/></g><circle cx="1398" cy="75" r="6.8" fill="#dde6f5"/><circle cx="1417" cy="75" r="6.6" fill="none" stroke="#dcdcdc" stroke-width="1"/><path d="M1417 75V68.4A6.6 6.6 0 0 0 1411.3 78.3Z" fill="#d4d4d4"/><path d="M1419 78L1422 76M1418 80L1421.5 78.5" stroke="#bdbdbd" stroke-width="0.8"/><circle cx="1436" cy="75" r="6.6" fill="none" stroke="#dcdcdc" stroke-width="1"/><path d="M1432 73.5A4.5 4.5 0 0 1 1435 70.5" stroke="#dcdcdc" stroke-width="1.4" fill="none" stroke-linecap="round"/><path d="M1438 80L1441 77M1436 81L1440 78.5" stroke="#bdbdbd" stroke-width="0.8"/><path d="M1453.0 74.25L1455.5 76.75L1458.0 74.25" stroke="#cfcfcf" stroke-width="1.2" fill="none" stroke-linecap="round" stroke-linejoin="round"/><rect x="11" y="93" width="94" height="18" rx="4" fill="#545454"/><path d="M11 97A4 4 0 0 1 15 93H29.5V111H15A4 4 0 0 1 11 107Z" fill="#4772b3"/><rect x="48" y="93" width="0.8" height="18" fill="#484848"/><rect x="67.5" y="93" width="0.8" height="18" fill="#484848"/><rect x="86.5" y="93" width="0.8" height="18" fill="#484848"/><rect x="14" y="96" width="12" height="12" fill="none" stroke="#fff" stroke-width="1.2" stroke-dasharray="2.2 1.6"/><path d="M33 102H37V97H45V105H41V109H33Z" fill="#c8c8c8"/><path d="M55 97H64V105H60V101H55Z" fill="#c8c8c8"/><rect x="52" y="101.5" width="8" height="7.5" fill="none" stroke="#c8c8c8" stroke-width="0.9" stroke-dasharray="1.6 1.4"/><path d="M74 97H83V105H79V109H70V101H74Z" fill="#c8c8c8"/><rect x="74" y="101" width="5" height="4" fill="#545454"/><rect x="90" y="96.5" width="12" height="12" fill="none" stroke="#c8c8c8" stroke-width="0.9" stroke-dasharray="1.8 1.6"/><rect x="93" y="99.5" width="6" height="6" fill="#c8c8c8"/><rect x="1400.5" y="93.5" width="65" height="18" rx="4" fill="#2a2a2a" stroke="#383838" stroke-width="1"/><path d="M1456.5 101.75L1459 104.25L1461.5 101.75" stroke="#cfcfcf" stroke-width="1.2" fill="none" stroke-linecap="round" stroke-linejoin="round"/></svg>
<div style="position:absolute;left:74px;top:69.34px;line-height:14px;font-size:12px;color:#e6e6e6;font-weight:normal;white-space:nowrap;">Object Mode</div>
<div style="position:absolute;left:171px;top:69.34px;line-height:14px;font-size:12px;color:#e2e2e2;font-weight:normal;white-space:nowrap;">View</div>
<div style="position:absolute;left:211px;top:69.34px;line-height:14px;font-size:12px;color:#e2e2e2;font-weight:normal;white-space:nowrap;">Select</div>
<div style="position:absolute;left:260px;top:69.34px;line-height:14px;font-size:12px;color:#e2e2e2;font-weight:normal;white-space:nowrap;">Add</div>
<div style="position:absolute;left:297px;top:69.34px;line-height:14px;font-size:12px;color:#e2e2e2;font-weight:normal;white-space:nowrap;">Object</div>
<div style="position:absolute;left:639px;top:68.84px;line-height:14px;font-size:12px;color:#e6e6e6;font-weight:normal;white-space:nowrap;">Global</div>
<div style="position:absolute;left:1407px;top:95.84px;line-height:14px;font-size:12px;color:#e6e6e6;font-weight:normal;white-space:nowrap;">Options</div>
<svg style="position:absolute;left:0px;top:0px;overflow:visible;" width="60" height="460" viewBox="0 0 60 460"><rect x="11" y="124" width="38" height="68" rx="5" fill="#282828"/><rect x="11" y="199" width="38" height="138" rx="5" fill="#282828"/><rect x="11" y="344" width="38" height="68" rx="5" fill="#282828"/><rect x="11" y="419" width="38" height="33" rx="5" fill="#282828"/><rect x="11" y="157" width="38" height="1" fill="#363636"/><rect x="11" y="232.5" width="38" height="1" fill="#363636"/><rect x="11" y="267" width="38" height="1" fill="#363636"/><rect x="11" y="302" width="38" height="1" fill="#363636"/><rect x="11" y="378" width="38" height="1" fill="#363636"/><path d="M11 129A5 5 0 0 1 16 124H44A5 5 0 0 1 49 129V157H11Z" fill="#4772b3"/><rect x="19.5" y="129.5" width="21" height="21" fill="none" stroke="#f0a020" stroke-width="1.4" stroke-dasharray="3 2.2"/><path d="M27 133L34.5 140.5L30.5 141L27.5 145.5Z" fill="#e6e6e6"/><path d="M45 154L47 152V154Z" fill="#c0c0c0"/><circle cx="30" cy="175" r="11" fill="none" stroke="#f0f0f0" stroke-width="1.6"/><circle cx="30" cy="175" r="11" fill="none" stroke="#a33030" stroke-width="1.6" stroke-dasharray="5.7 5.8" stroke-dashoffset="3"/><path d="M30 169V173M30 177V181M24 175H28M32 175H36" stroke="#9a9a9a" stroke-width="1.2"/><g fill="#e0e0e0"><path d="M30 204L27 208.5H33Z"/><path d="M30 227L27 222.5H33Z"/><path d="M18.5 215.5L23 212.5V218.5Z"/><path d="M41.5 215.5L37 212.5V218.5Z"/></g><path d="M30 209V213M30 218V222M23.5 215.5H27.5M32.5 215.5H36.5" stroke="#e0e0e0" stroke-width="1.4"/><path d="M22.5 246A8 8 0 0 1 37.5 246M37.5 254A8 8 0 0 1 22.5 254" stroke="#e0e0e0" stroke-width="1.3" fill="none"/><path d="M30 246L34 250L30 254L26 250Z" fill="#c8c8c8"/><path d="M18.5 248H25L21.75 252.5Z" fill="#e0e0e0"/><path d="M41.5 252H35L38.25 247.5Z" fill="#e0e0e0"/><rect x="21" y="286" width="8" height="7.5" fill="#e6e6e6"/><path d="M26 282V278H38V290H33M30 287L36.5 280.5M33 280H37V284" stroke="#e0e0e0" stroke-width="1.3" fill="none"/><path d="M45 299L47 297V299Z" fill="#c0c0c0"/><circle cx="30" cy="320" r="10" fill="none" stroke="#e0e0e0" stroke-width="1.3" stroke-dasharray="4.5 3.35"/><rect x="25" y="315" width="10" height="10" fill="#e6e6e6"/><g fill="#e0e0e0"><path d="M30 309L27.5 312H32.5Z"/><path d="M30 331L27.5 328H32.5Z"/><path d="M19 320L22 317.5V322.5Z"/><path d="M41 320L38 317.5V322.5Z"/></g><path d="M21 363L33.5 350.5L36.5 353.5L24 366L20 367Z" fill="#e6e6e6"/><path d="M21 369C26 372 28 363 32 364C35 365 37 369 40 369" stroke="#6ccf9a" stroke-width="1.5" fill="none"/><path d="M45 375L47 373V375Z" fill="#c0c0c0"/><path d="M22 385V406H42V403H25V385Z" fill="#e6e6e6"/><path d="M26 388H28M26 392H28M26 396H28M26 400H28M29 403V401M33 403V401M37 403V401" stroke="#282828" stroke-width="1"/><path d="M26 402V392A10 10 0 0 1 37 402Z" fill="#7fd0a0"/><path d="M27 390A13 13 0 0 1 40 402" stroke="#e6e6e6" stroke-width="1" fill="none"/><path d="M22 425V431M19 428H25" stroke="#7fd0a0" stroke-width="1.8"/><path d="M24 433H36V446H24ZM24 433L28 429H40V442L36 446M36 433L40 429" stroke="#7fd0a0" stroke-width="1.1" fill="none"/><path d="M45 449L47 447V449Z" fill="#c0c0c0"/></svg>
<div style="position:absolute;left:67.5px;top:123.82px;line-height:14px;font-size:11.5px;color:#f2f2f2;font-weight:normal;white-space:nowrap;text-shadow:1px 0 1px #111,-1px 0 1px #111,0 1px 1px #111,0 -1px 1px #111">User Perspective</div>
<div style="position:absolute;left:67.5px;top:142.02px;line-height:14px;font-size:11.5px;color:#f2f2f2;font-weight:normal;white-space:nowrap;letter-spacing:0.23px;text-shadow:1px 0 1px #111,-1px 0 1px #111,0 1px 1px #111,0 -1px 1px #111">(1) Collection | J6</div>
<svg style="position:absolute;left:0px;top:0px;overflow:visible;" width="1480" height="340" viewBox="0 0 1480 340"><circle cx="1395.1" cy="158.9" r="7.3" fill="#5b3d43" stroke="#c63a4e" stroke-width="1.3"/><circle cx="1422.9" cy="194.8" r="7.3" fill="#3b4a5e" stroke="#3a7ed8" stroke-width="1.3"/><path d="M1422.9 164.4V140M1422.9 164.4L1433 157M1422.9 164.4L1443 168.5" stroke-width="1.6" fill="none" stroke="#3a8ee6"/><path d="M1422.9 164.4L1433 157" stroke="#6b9a2a" stroke-width="1.6"/><path d="M1422.9 164.4L1443 168.5" stroke="#e23a55" stroke-width="1.6"/><circle cx="1407.3" cy="174.9" r="8.1" fill="#566b31" stroke="#8ee000" stroke-width="1.5"/><circle cx="1438.5" cy="154.7" r="7.6" fill="#6b9a2a"/><circle cx="1422.9" cy="134.8" r="8.1" fill="#3a8ee6"/><circle cx="1450.8" cy="170.5" r="8.2" fill="#e23a55"/><path d="M1419.5 131H1426.3L1419.5 138.6H1426.3" stroke="#0e1a33" stroke-width="1.3" fill="none"/><path d="M1435.5 151L1438.5 155V158.5M1441.5 151L1438.5 155" stroke="#10200a" stroke-width="1.3" fill="none"/><path d="M1447.8 166.5L1453.8 174.5M1453.8 166.5L1447.8 174.5" stroke="#3a0a12" stroke-width="1.3" fill="none"/><path d="M1474 137H1468A4 4 0 0 0 1464 141V150A4 4 0 0 0 1468 154H1474Z" fill="#343434"/><path d="M1470.5 142.5L1467.5 146L1470.5 149.5" stroke="#b0b0b0" stroke-width="1" fill="none"/><circle cx="1451.1" cy="219.9" r="13.3" fill="#2f2f2f" fill-opacity="0.85"/><circle cx="1451.1" cy="250" r="13.3" fill="#2f2f2f" fill-opacity="0.85"/><circle cx="1451.1" cy="279.5" r="13.3" fill="#2f2f2f" fill-opacity="0.85"/><circle cx="1451.1" cy="309.6" r="13.3" fill="#2f2f2f" fill-opacity="0.85"/><circle cx="1449.5" cy="218.5" r="5.6" fill="#e0e0e0"/><path d="M1453 222L1458 227" stroke="#e0e0e0" stroke-width="2.2" stroke-linecap="round"/><path d="M1449.5 215.5V221.5M1446.5 218.5H1452.5" stroke="#2f2f2f" stroke-width="1.2"/><path d="M1444.5 250.5L1447 249V243.5Q1447 242 1448 242Q1449 242 1449 243.5V248V242Q1449 240.5 1450 240.5Q1451 240.5 1451 242V248V242.5Q1451 241 1452 241Q1453 241 1453 242.5V248.5V244.5Q1453 243.5 1454 243.5Q1455 243.5 1455 244.5V252Q1455 257 1450.5 257Q1447.5 257 1445.5 254Z" fill="#e0e0e0"/><g stroke="#e0e0e0" stroke-width="1" fill="none"><path d="M1443.5 273Q1443.5 270 1447 270H1452Q1455 268 1457 269Q1459.5 271 1458 275Q1457 277.5 1454 276.5H1446Q1443.5 276.5 1443.5 273Z"/><rect x="1446" y="280" width="6.5" height="5"/><path d="M1453.5 282.5L1458 280V285Z"/><path d="M1443 282.5H1446"/></g><circle cx="1455" cy="272.5" r="1.2" fill="#e0e0e0"/><g stroke="#e0e0e0" stroke-width="1.1" fill="none"><path d="M1445.5 303H1456.5L1459 316H1443Z"/><path d="M1444.2 307.5H1457.8M1443.6 312H1458.4M1449.2 303L1448.5 316M1452.8 303L1453.5 316"/></g></svg>
<svg style="position:absolute;left:0px;top:0px;overflow:visible;" width="1920" height="480" viewBox="0 0 1920 480"><rect x="1477.5" y="63.5" width="440" height="406" rx="6" fill="#272727" stroke="#353535" stroke-width="1"/><rect x="1478" y="110" width="439" height="20" fill="#2b2b2b"/><rect x="1478" y="150" width="439" height="20" fill="#2b2b2b"/><rect x="1478" y="190" width="439" height="20" fill="#2b2b2b"/><rect x="1478" y="230" width="439" height="20" fill="#2b2b2b"/><rect x="1478" y="270" width="439" height="20" fill="#2b2b2b"/><rect x="1478" y="310" width="439" height="20" fill="#2b2b2b"/><rect x="1478" y="350" width="439" height="20" fill="#2b2b2b"/><rect x="1478" y="390" width="439" height="20" fill="#2b2b2b"/><rect x="1478" y="430" width="439" height="20" fill="#2b2b2b"/><rect x="1486.5" y="65.5" width="31" height="19" rx="4" fill="#282828" stroke="#3a3a3a" stroke-width="1"/><g fill="#e0e0e0"><rect x="1491" y="68" width="5.5" height="3"/><rect x="1498" y="74" width="7" height="3"/><rect x="1498" y="79" width="7" height="3"/></g><path d="M1493 71V80.5H1498M1493 75.5H1498" stroke="#cfcfcf" stroke-width="0.9" fill="none"/><path d="M1509.0 74.25L1511.5 76.75L1514.0 74.25" stroke="#cfcfcf" stroke-width="1.2" fill="none" stroke-linecap="round" stroke-linejoin="round"/><rect x="1523.5" y="65.5" width="31" height="19" rx="4" fill="#282828" stroke="#3a3a3a" stroke-width="1"/><path d="M1528.5 73V82H1538M1530.5 71V80H1540" stroke="#d8d8d8" stroke-width="0.9" fill="none"/><rect x="1532.5" y="68.5" width="9" height="9" fill="none" stroke="#e6e6e6" stroke-width="1.1"/><path d="M1533.5 77L1536 71.5L1538.5 77Z" fill="#e6e6e6"/><circle cx="1539.5" cy="71" r="0.8" fill="#e6e6e6"/><path d="M1546.0 74.25L1548.5 76.75L1551.0 74.25" stroke="#cfcfcf" stroke-width="1.2" fill="none" stroke-linecap="round" stroke-linejoin="round"/><rect x="1627.5" y="65.5" width="118" height="19" rx="4" fill="#1d1d1d" stroke="#393939" stroke-width="1"/><circle cx="1637" cy="73" r="4.2" fill="none" stroke="#e0e0e0" stroke-width="1.1"/><path d="M1640 76L1645 81" stroke="#e0e0e0" stroke-width="1.2"/><rect x="1853.5" y="65.5" width="31" height="19" rx="4" fill="#282828" stroke="#3a3a3a" stroke-width="1"/><path d="M1856.5 68.5H1869.5L1864.5 74.5V82L1861.5 78.5V74.5Z" fill="none" stroke="#e0e0e0" stroke-width="1.1" stroke-linejoin="round"/><path d="M1876.0 74.75L1878.5 77.25L1881.0 74.75" stroke="#cfcfcf" stroke-width="1.2" fill="none" stroke-linecap="round" stroke-linejoin="round"/><rect x="1890.5" y="65.5" width="19" height="19" rx="4" fill="#4a4a4a"/><path d="M1896 70V71H1893V73.5H1896M1894 75V82H1904V77" stroke="#e6e6e6" stroke-width="1" fill="none"/><rect x="1897" y="77.5" width="3.5" height="1.4" fill="#e6e6e6"/><circle cx="1903.5" cy="71.5" r="3.8" fill="#e6e6e6"/><path d="M1903.5 69.3V73.7M1901.3 71.5H1905.7" stroke="#4a4a4a" stroke-width="1"/><rect x="1501" y="93.5" width="14" height="3" fill="#e6e6e6" stroke="#111" stroke-width="0.6"/><rect x="1502" y="97.5" width="12" height="9" fill="#e6e6e6" stroke="#111" stroke-width="0.6"/><rect x="1506" y="99.5" width="4" height="1.6" rx="0.8" fill="#111"/><rect x="1518.5" y="111.5" width="19" height="17" rx="4" fill="#454545" stroke="#5a5a5a" stroke-width="1"/><rect x="1521" y="113.5" width="14" height="3" fill="#e6e6e6" stroke="#111" stroke-width="0.6"/><rect x="1522" y="117.5" width="12" height="9" fill="#e6e6e6" stroke="#111" stroke-width="0.6"/><rect x="1526" y="119.5" width="4" height="1.6" rx="0.8" fill="#111"/><path d="M1505.3 118.9L1508.5 122.1L1511.7 118.9" stroke="#d0d0d0" stroke-width="1.1" fill="none" stroke-linecap="round" stroke-linejoin="round"/><rect x="1853" y="115" width="10" height="10" rx="1.5" fill="#e6e6e6"/><path d="M1855 120L1857.5 122.5L1861 117.5" stroke="#222" stroke-width="1.6" fill="none"/><rect x="1507" y="135" width="1" height="270" fill="#8a8a8a" opacity="0.7"/><path d="M1527.4 155V405" stroke="#9a9a9a" stroke-width="1" stroke-dasharray="3 3" opacity="0.8"/><path d="M1547.4 175V385" stroke="#9a9a9a" stroke-width="1" stroke-dasharray="3 3" opacity="0.8"/><path d="M1567.4 195V365" stroke="#9a9a9a" stroke-width="1" stroke-dasharray="3 3" opacity="0.8"/><path d="M1587.4 215V345" stroke="#9a9a9a" stroke-width="1" stroke-dasharray="3 3" opacity="0.8"/><path d="M1607.4 235V325" stroke="#9a9a9a" stroke-width="1" stroke-dasharray="3 3" opacity="0.8"/><path d="M1627.4 255V305" stroke="#9a9a9a" stroke-width="1" stroke-dasharray="3 3" opacity="0.8"/><path d="M1647.4 265V285" stroke="#9a9a9a" stroke-width="1" stroke-dasharray="3 3" opacity="0.8"/><path d="M1525.3 138.9L1528.5 142.1L1531.7 138.9" stroke="#d0d0d0" stroke-width="1.1" fill="none" stroke-linecap="round" stroke-linejoin="round"/><path d="M1547.2 134V141.5H1554.2M1547.2 141.5L1542.7 145" stroke="#d98c4a" stroke-width="2.2" fill="none" stroke-linecap="round"/><path d="M1545.3 158.9L1548.5 162.1L1551.7 158.9" stroke="#d0d0d0" stroke-width="1.1" fill="none" stroke-linecap="round" stroke-linejoin="round"/><path d="M1567.2 154V161.5H1574.2M1567.2 161.5L1562.7 165" stroke="#d98c4a" stroke-width="2.2" fill="none" stroke-linecap="round"/><path d="M1565.3 178.9L1568.5 182.1L1571.7 178.9" stroke="#d0d0d0" stroke-width="1.1" fill="none" stroke-linecap="round" stroke-linejoin="round"/><path d="M1587.2 174V181.5H1594.2M1587.2 181.5L1582.7 185" stroke="#d98c4a" stroke-width="2.2" fill="none" stroke-linecap="round"/><path d="M1585.3 198.9L1588.5 202.1L1591.7 198.9" stroke="#d0d0d0" stroke-width="1.1" fill="none" stroke-linecap="round" stroke-linejoin="round"/><path d="M1607.2 194V201.5H1614.2M1607.2 201.5L1602.7 205" stroke="#d98c4a" stroke-width="2.2" fill="none" stroke-linecap="round"/><path d="M1605.3 218.9L1608.5 222.1L1611.7 218.9" stroke="#d0d0d0" stroke-width="1.1" fill="none" stroke-linecap="round" stroke-linejoin="round"/><path d="M1627.2 214V221.5H1634.2M1627.2 221.5L1622.7 225" stroke="#d98c4a" stroke-width="2.2" fill="none" stroke-linecap="round"/><path d="M1625.3 238.9L1628.5 242.1L1631.7 238.9" stroke="#d0d0d0" stroke-width="1.1" fill="none" stroke-linecap="round" stroke-linejoin="round"/><path d="M1647.2 234V241.5H1654.2M1647.2 241.5L1642.7 245" stroke="#d98c4a" stroke-width="2.2" fill="none" stroke-linecap="round"/><path d="M1645.3 258.9L1648.5 262.1L1651.7 258.9" stroke="#d0d0d0" stroke-width="1.1" fill="none" stroke-linecap="round" stroke-linejoin="round"/><rect x="1658.5" y="251.5" width="19" height="17" rx="4" fill="#4a4a4a" stroke="#5e5e5e" stroke-width="1"/><path d="M1667.2 254V261.5H1674.2M1667.2 261.5L1662.7 265" stroke="#d98c4a" stroke-width="2.2" fill="none" stroke-linecap="round"/><path d="M1666.8 276.9L1670.3999999999999 280.5L1666.8 284.1" stroke="#d0d0d0" stroke-width="1.1" fill="none" stroke-linecap="round" stroke-linejoin="round"/><path d="M1682.4 274.5H1693.6L1688 286Z" fill="none" stroke="#d98c4a" stroke-width="2.4" stroke-linejoin="round"/><path d="M1752.8 275L1762.8 275L1757.8 285Z" fill="none" stroke="#21c4a0" stroke-width="1.2"/><rect x="1751.2" y="273.4" width="3.2" height="3.2" fill="#282828" stroke="#21c4a0" stroke-width="1.1"/><rect x="1761.2" y="273.4" width="3.2" height="3.2" fill="#282828" stroke="#21c4a0" stroke-width="1.1"/><rect x="1756.2" y="283.4" width="3.2" height="3.2" fill="#282828" stroke="#21c4a0" stroke-width="1.1"/><path d="M1646.8 296.9L1650.3999999999999 300.5L1646.8 304.1" stroke="#d0d0d0" stroke-width="1.1" fill="none" stroke-linecap="round" stroke-linejoin="round"/><path d="M1662.4 294.5H1673.6L1668 306Z" fill="none" stroke="#d98c4a" stroke-width="2.4" stroke-linejoin="round"/><path d="M1732.8 295L1742.8 295L1737.8 305Z" fill="none" stroke="#21c4a0" stroke-width="1.2"/><rect x="1731.2" y="293.4" width="3.2" height="3.2" fill="#282828" stroke="#21c4a0" stroke-width="1.1"/><rect x="1741.2" y="293.4" width="3.2" height="3.2" fill="#282828" stroke="#21c4a0" stroke-width="1.1"/><rect x="1736.2" y="303.4" width="3.2" height="3.2" fill="#282828" stroke="#21c4a0" stroke-width="1.1"/><path d="M1626.8 316.9L1630.3999999999999 320.5L1626.8 324.1" stroke="#d0d0d0" stroke-width="1.1" fill="none" stroke-linecap="round" stroke-linejoin="round"/><path d="M1642.4 314.5H1653.6L1648 326Z" fill="none" stroke="#d98c4a" stroke-width="2.4" stroke-linejoin="round"/><path d="M1712.8 315L1722.8 315L1717.8 325Z" fill="none" stroke="#21c4a0" stroke-width="1.2"/><rect x="1711.2" y="313.4" width="3.2" height="3.2" fill="#282828" stroke="#21c4a0" stroke-width="1.1"/><rect x="1721.2" y="313.4" width="3.2" height="3.2" fill="#282828" stroke="#21c4a0" stroke-width="1.1"/><rect x="1716.2" y="323.4" width="3.2" height="3.2" fill="#282828" stroke="#21c4a0" stroke-width="1.1"/><path d="M1606.8 336.9L1610.3999999999999 340.5L1606.8 344.1" stroke="#d0d0d0" stroke-width="1.1" fill="none" stroke-linecap="round" stroke-linejoin="round"/><path d="M1622.4 334.5H1633.6L1628 346Z" fill="none" stroke="#d98c4a" stroke-width="2.4" stroke-linejoin="round"/><path d="M1692.8 335L1702.8 335L1697.8 345Z" fill="none" stroke="#21c4a0" stroke-width="1.2"/><rect x="1691.2" y="333.4" width="3.2" height="3.2" fill="#282828" stroke="#21c4a0" stroke-width="1.1"/><rect x="1701.2" y="333.4" width="3.2" height="3.2" fill="#282828" stroke="#21c4a0" stroke-width="1.1"/><rect x="1696.2" y="343.4" width="3.2" height="3.2" fill="#282828" stroke="#21c4a0" stroke-width="1.1"/><path d="M1586.8 356.9L1590.3999999999999 360.5L1586.8 364.1" stroke="#d0d0d0" stroke-width="1.1" fill="none" stroke-linecap="round" stroke-linejoin="round"/><path d="M1602.4 354.5H1613.6L1608 366Z" fill="none" stroke="#d98c4a" stroke-width="2.4" stroke-linejoin="round"/><path d="M1672.8 355L1682.8 355L1677.8 365Z" fill="none" stroke="#21c4a0" stroke-width="1.2"/><rect x="1671.2" y="353.4" width="3.2" height="3.2" fill="#282828" stroke="#21c4a0" stroke-width="1.1"/><rect x="1681.2" y="353.4" width="3.2" height="3.2" fill="#282828" stroke="#21c4a0" stroke-width="1.1"/><rect x="1676.2" y="363.4" width="3.2" height="3.2" fill="#282828" stroke="#21c4a0" stroke-width="1.1"/><path d="M1566.8 376.9L1570.3999999999999 380.5L1566.8 384.1" stroke="#d0d0d0" stroke-width="1.1" fill="none" stroke-linecap="round" stroke-linejoin="round"/><path d="M1582.4 374.5H1593.6L1588 386Z" fill="none" stroke="#d98c4a" stroke-width="2.4" stroke-linejoin="round"/><path d="M1652.8 375L1662.8 375L1657.8 385Z" fill="none" stroke="#21c4a0" stroke-width="1.2"/><rect x="1651.2" y="373.4" width="3.2" height="3.2" fill="#282828" stroke="#21c4a0" stroke-width="1.1"/><rect x="1661.2" y="373.4" width="3.2" height="3.2" fill="#282828" stroke="#21c4a0" stroke-width="1.1"/><rect x="1656.2" y="383.4" width="3.2" height="3.2" fill="#282828" stroke="#21c4a0" stroke-width="1.1"/><path d="M1546.8 396.9L1550.3999999999999 400.5L1546.8 404.1" stroke="#d0d0d0" stroke-width="1.1" fill="none" stroke-linecap="round" stroke-linejoin="round"/><path d="M1562.4 394.5H1573.6L1568 406Z" fill="none" stroke="#d98c4a" stroke-width="2.4" stroke-linejoin="round"/><path d="M1632.8 395L1642.8 395L1637.8 405Z" fill="none" stroke="#21c4a0" stroke-width="1.2"/><rect x="1631.2" y="393.4" width="3.2" height="3.2" fill="#282828" stroke="#21c4a0" stroke-width="1.1"/><rect x="1641.2" y="393.4" width="3.2" height="3.2" fill="#282828" stroke="#21c4a0" stroke-width="1.1"/><rect x="1636.2" y="403.4" width="3.2" height="3.2" fill="#282828" stroke="#21c4a0" stroke-width="1.1"/><path d="M1872.3 120Q1878.3 112.5 1884.3 120Q1878.3 127.5 1872.3 120Z" fill="none" stroke="#e6e6e6" stroke-width="1.5"/><circle cx="1878.3" cy="120" r="2.6" fill="none" stroke="#e6e6e6" stroke-width="1.3"/><circle cx="1878.3" cy="120" r="0.9" fill="#e6e6e6"/><path d="M1892.0 116H1895.5L1896.7 114.2H1900.3L1901.5 116H1905.0V125.5H1892.0Z" fill="#e6e6e6"/><circle cx="1898.5" cy="120.7" r="3.3" fill="none" stroke="#2a2a2a" stroke-width="1"/><circle cx="1898.5" cy="120.7" r="1.4" fill="#2a2a2a"/><path d="M1872.3 140Q1878.3 132.5 1884.3 140Q1878.3 147.5 1872.3 140Z" fill="none" stroke="#e6e6e6" stroke-width="1.5"/><circle cx="1878.3" cy="140" r="2.6" fill="none" stroke="#e6e6e6" stroke-width="1.3"/><circle cx="1878.3" cy="140" r="0.9" fill="#e6e6e6"/><path d="M1892.0 136H1895.5L1896.7 134.2H1900.3L1901.5 136H1905.0V145.5H1892.0Z" fill="#e6e6e6"/><circle cx="1898.5" cy="140.7" r="3.3" fill="none" stroke="#2a2a2a" stroke-width="1"/><circle cx="1898.5" cy="140.7" r="1.4" fill="#2a2a2a"/><path d="M1872.3 160Q1878.3 152.5 1884.3 160Q1878.3 167.5 1872.3 160Z" fill="none" stroke="#e6e6e6" stroke-width="1.5"/><circle cx="1878.3" cy="160" r="2.6" fill="none" stroke="#e6e6e6" stroke-width="1.3"/><circle cx="1878.3" cy="160" r="0.9" fill="#e6e6e6"/><path d="M1892.0 156H1895.5L1896.7 154.2H1900.3L1901.5 156H1905.0V165.5H1892.0Z" fill="#e6e6e6"/><circle cx="1898.5" cy="160.7" r="3.3" fill="none" stroke="#2a2a2a" stroke-width="1"/><circle cx="1898.5" cy="160.7" r="1.4" fill="#2a2a2a"/><path d="M1872.3 180Q1878.3 172.5 1884.3 180Q1878.3 187.5 1872.3 180Z" fill="none" stroke="#e6e6e6" stroke-width="1.5"/><circle cx="1878.3" cy="180" r="2.6" fill="none" stroke="#e6e6e6" stroke-width="1.3"/><circle cx="1878.3" cy="180" r="0.9" fill="#e6e6e6"/><path d="M1892.0 176H1895.5L1896.7 174.2H1900.3L1901.5 176H1905.0V185.5H1892.0Z" fill="#e6e6e6"/><circle cx="1898.5" cy="180.7" r="3.3" fill="none" stroke="#2a2a2a" stroke-width="1"/><circle cx="1898.5" cy="180.7" r="1.4" fill="#2a2a2a"/><path d="M1872.3 200Q1878.3 192.5 1884.3 200Q1878.3 207.5 1872.3 200Z" fill="none" stroke="#e6e6e6" stroke-width="1.5"/><circle cx="1878.3" cy="200" r="2.6" fill="none" stroke="#e6e6e6" stroke-width="1.3"/><circle cx="1878.3" cy="200" r="0.9" fill="#e6e6e6"/><path d="M1892.0 196H1895.5L1896.7 194.2H1900.3L1901.5 196H1905.0V205.5H1892.0Z" fill="#e6e6e6"/><circle cx="1898.5" cy="200.7" r="3.3" fill="none" stroke="#2a2a2a" stroke-width="1"/><circle cx="1898.5" cy="200.7" r="1.4" fill="#2a2a2a"/><path d="M1872.3 220Q1878.3 212.5 1884.3 220Q1878.3 227.5 1872.3 220Z" fill="none" stroke="#e6e6e6" stroke-width="1.5"/><circle cx="1878.3" cy="220" r="2.6" fill="none" stroke="#e6e6e6" stroke-width="1.3"/><circle cx="1878.3" cy="220" r="0.9" fill="#e6e6e6"/><path d="M1892.0 216H1895.5L1896.7 214.2H1900.3L1901.5 216H1905.0V225.5H1892.0Z" fill="#e6e6e6"/><circle cx="1898.5" cy="220.7" r="3.3" fill="none" stroke="#2a2a2a" stroke-width="1"/><circle cx="1898.5" cy="220.7" r="1.4" fill="#2a2a2a"/><path d="M1872.3 240Q1878.3 232.5 1884.3 240Q1878.3 247.5 1872.3 240Z" fill="none" stroke="#e6e6e6" stroke-width="1.5"/><circle cx="1878.3" cy="240" r="2.6" fill="none" stroke="#e6e6e6" stroke-width="1.3"/><circle cx="1878.3" cy="240" r="0.9" fill="#e6e6e6"/><path d="M1892.0 236H1895.5L1896.7 234.2H1900.3L1901.5 236H1905.0V245.5H1892.0Z" fill="#e6e6e6"/><circle cx="1898.5" cy="240.7" r="3.3" fill="none" stroke="#2a2a2a" stroke-width="1"/><circle cx="1898.5" cy="240.7" r="1.4" fill="#2a2a2a"/><path d="M1872.3 260Q1878.3 252.5 1884.3 260Q1878.3 267.5 1872.3 260Z" fill="none" stroke="#e6e6e6" stroke-width="1.5"/><circle cx="1878.3" cy="260" r="2.6" fill="none" stroke="#e6e6e6" stroke-width="1.3"/><circle cx="1878.3" cy="260" r="0.9" fill="#e6e6e6"/><path d="M1892.0 256H1895.5L1896.7 254.2H1900.3L1901.5 256H1905.0V265.5H1892.0Z" fill="#e6e6e6"/><circle cx="1898.5" cy="260.7" r="3.3" fill="none" stroke="#2a2a2a" stroke-width="1"/><circle cx="1898.5" cy="260.7" r="1.4" fill="#2a2a2a"/><path d="M1872.3 280Q1878.3 272.5 1884.3 280Q1878.3 287.5 1872.3 280Z" fill="none" stroke="#e6e6e6" stroke-width="1.5"/><circle cx="1878.3" cy="280" r="2.6" fill="none" stroke="#e6e6e6" stroke-width="1.3"/><circle cx="1878.3" cy="280" r="0.9" fill="#e6e6e6"/><path d="M1892.0 276H1895.5L1896.7 274.2H1900.3L1901.5 276H1905.0V285.5H1892.0Z" fill="#e6e6e6"/><circle cx="1898.5" cy="280.7" r="3.3" fill="none" stroke="#2a2a2a" stroke-width="1"/><circle cx="1898.5" cy="280.7" r="1.4" fill="#2a2a2a"/><path d="M1872.3 300Q1878.3 292.5 1884.3 300Q1878.3 307.5 1872.3 300Z" fill="none" stroke="#e6e6e6" stroke-width="1.5"/><circle cx="1878.3" cy="300" r="2.6" fill="none" stroke="#e6e6e6" stroke-width="1.3"/><circle cx="1878.3" cy="300" r="0.9" fill="#e6e6e6"/><path d="M1892.0 296H1895.5L1896.7 294.2H1900.3L1901.5 296H1905.0V305.5H1892.0Z" fill="#e6e6e6"/><circle cx="1898.5" cy="300.7" r="3.3" fill="none" stroke="#2a2a2a" stroke-width="1"/><circle cx="1898.5" cy="300.7" r="1.4" fill="#2a2a2a"/><path d="M1872.3 320Q1878.3 312.5 1884.3 320Q1878.3 327.5 1872.3 320Z" fill="none" stroke="#e6e6e6" stroke-width="1.5"/><circle cx="1878.3" cy="320" r="2.6" fill="none" stroke="#e6e6e6" stroke-width="1.3"/><circle cx="1878.3" cy="320" r="0.9" fill="#e6e6e6"/><path d="M1892.0 316H1895.5L1896.7 314.2H1900.3L1901.5 316H1905.0V325.5H1892.0Z" fill="#e6e6e6"/><circle cx="1898.5" cy="320.7" r="3.3" fill="none" stroke="#2a2a2a" stroke-width="1"/><circle cx="1898.5" cy="320.7" r="1.4" fill="#2a2a2a"/><path d="M1872.3 340Q1878.3 332.5 1884.3 340Q1878.3 347.5 1872.3 340Z" fill="none" stroke="#e6e6e6" stroke-width="1.5"/><circle cx="1878.3" cy="340" r="2.6" fill="none" stroke="#e6e6e6" stroke-width="1.3"/><circle cx="1878.3" cy="340" r="0.9" fill="#e6e6e6"/><path d="M1892.0 336H1895.5L1896.7 334.2H1900.3L1901.5 336H1905.0V345.5H1892.0Z" fill="#e6e6e6"/><circle cx="1898.5" cy="340.7" r="3.3" fill="none" stroke="#2a2a2a" stroke-width="1"/><circle cx="1898.5" cy="340.7" r="1.4" fill="#2a2a2a"/><path d="M1872.3 360Q1878.3 352.5 1884.3 360Q1878.3 367.5 1872.3 360Z" fill="none" stroke="#e6e6e6" stroke-width="1.5"/><circle cx="1878.3" cy="360" r="2.6" fill="none" stroke="#e6e6e6" stroke-width="1.3"/><circle cx="1878.3" cy="360" r="0.9" fill="#e6e6e6"/><path d="M1892.0 356H1895.5L1896.7 354.2H1900.3L1901.5 356H1905.0V365.5H1892.0Z" fill="#e6e6e6"/><circle cx="1898.5" cy="360.7" r="3.3" fill="none" stroke="#2a2a2a" stroke-width="1"/><circle cx="1898.5" cy="360.7" r="1.4" fill="#2a2a2a"/><path d="M1872.3 380Q1878.3 372.5 1884.3 380Q1878.3 387.5 1872.3 380Z" fill="none" stroke="#e6e6e6" stroke-width="1.5"/><circle cx="1878.3" cy="380" r="2.6" fill="none" stroke="#e6e6e6" stroke-width="1.3"/><circle cx="1878.3" cy="380" r="0.9" fill="#e6e6e6"/><path d="M1892.0 376H1895.5L1896.7 374.2H1900.3L1901.5 376H1905.0V385.5H1892.0Z" fill="#e6e6e6"/><circle cx="1898.5" cy="380.7" r="3.3" fill="none" stroke="#2a2a2a" stroke-width="1"/><circle cx="1898.5" cy="380.7" r="1.4" fill="#2a2a2a"/><path d="M1872.3 400Q1878.3 392.5 1884.3 400Q1878.3 407.5 1872.3 400Z" fill="none" stroke="#e6e6e6" stroke-width="1.5"/><circle cx="1878.3" cy="400" r="2.6" fill="none" stroke="#e6e6e6" stroke-width="1.3"/><circle cx="1878.3" cy="400" r="0.9" fill="#e6e6e6"/><path d="M1892.0 396H1895.5L1896.7 394.2H1900.3L1901.5 396H1905.0V405.5H1892.0Z" fill="#e6e6e6"/><circle cx="1898.5" cy="400.7" r="3.3" fill="none" stroke="#2a2a2a" stroke-width="1"/><circle cx="1898.5" cy="400.7" r="1.4" fill="#2a2a2a"/></svg>
<div style="position:absolute;left:1653.5px;top:67.84px;line-height:14px;font-size:12px;color:#7a7a7a;font-weight:normal;white-space:nowrap;">Search</div>
<div style="position:absolute;left:1522.7px;top:94.34px;line-height:14px;font-size:12px;color:#cfcfcf;font-weight:normal;white-space:nowrap;letter-spacing:-0.15px">Scene Collection</div>
<div style="position:absolute;left:1542px;top:114.04px;line-height:14px;font-size:12px;color:#e6e6e6;font-weight:normal;white-space:nowrap;">Collection</div>
<div style="position:absolute;left:1561.8px;top:134.14px;line-height:14px;font-size:12px;color:#dcdcdc;font-weight:normal;white-space:nowrap;">J0</div>
<div style="position:absolute;left:1581.8px;top:154.14px;line-height:14px;font-size:12px;color:#dcdcdc;font-weight:normal;white-space:nowrap;">J1</div>
<div style="position:absolute;left:1601.8px;top:174.14px;line-height:14px;font-size:12px;color:#dcdcdc;font-weight:normal;white-space:nowrap;">J2</div>
<div style="position:absolute;left:1621.8px;top:194.14px;line-height:14px;font-size:12px;color:#dcdcdc;font-weight:normal;white-space:nowrap;">J3</div>
<div style="position:absolute;left:1641.8px;top:214.14px;line-height:14px;font-size:12px;color:#dcdcdc;font-weight:normal;white-space:nowrap;">J4</div>
<div style="position:absolute;left:1661.8px;top:234.14px;line-height:14px;font-size:12px;color:#dcdcdc;font-weight:normal;white-space:nowrap;">J5</div>
<div style="position:absolute;left:1681.8px;top:254.14px;line-height:14px;font-size:12px;color:#dcdcdc;font-weight:normal;white-space:nowrap;">J6</div>
<div style="position:absolute;left:1702.3px;top:274.34px;line-height:14px;font-size:12px;color:#d4d4d4;font-weight:normal;white-space:nowrap;">link6</div>
<div style="position:absolute;left:1682.3px;top:294.34px;line-height:14px;font-size:12px;color:#d4d4d4;font-weight:normal;white-space:nowrap;">link5</div>
<div style="position:absolute;left:1662.3px;top:314.34px;line-height:14px;font-size:12px;color:#d4d4d4;font-weight:normal;white-space:nowrap;">link4</div>
<div style="position:absolute;left:1642.3px;top:334.34px;line-height:14px;font-size:12px;color:#d4d4d4;font-weight:normal;white-space:nowrap;">link3</div>
<div style="position:absolute;left:1622.3px;top:354.34px;line-height:14px;font-size:12px;color:#d4d4d4;font-weight:normal;white-space:nowrap;">link2</div>
<div style="position:absolute;left:1602.3px;top:374.34px;line-height:14px;font-size:12px;color:#d4d4d4;font-weight:normal;white-space:nowrap;">link1</div>
<div style="position:absolute;left:1582.3px;top:394.34px;line-height:14px;font-size:12px;color:#d4d4d4;font-weight:normal;white-space:nowrap;">link0</div>
<svg style="position:absolute;left:0px;top:0px;overflow:visible;clip-path:inset(473px 2px 23px 1477px round 6px)" width="1920" height="1080" viewBox="0 0 1920 1080"><rect x="1477.5" y="473.5" width="440" height="583" rx="6" fill="#2f2f2f" stroke="#393939" stroke-width="1"/><path d="M1478 499H1506V1056H1484A6 6 0 0 1 1478 1050Z" fill="#1d1d1d"/><rect x="1486.5" y="476.5" width="31" height="19" rx="4" fill="#2a2a2a" stroke="#383838" stroke-width="1"/><g fill="#e6e6e6"><rect x="1491" y="479.5" width="13" height="5.5" rx="2.75"/><rect x="1491" y="486.5" width="13" height="5.5" rx="2.75"/></g><rect x="1497.5" y="480.5" width="5.5" height="3.5" rx="1.75" fill="#2a2a2a"/><rect x="1497.5" y="487.5" width="5.5" height="3.5" rx="1.75" fill="#2a2a2a"/><path d="M1509.3 484.4L1511.5 486.6L1513.7 484.4" stroke="#cfcfcf" stroke-width="1.2" fill="none" stroke-linecap="round" stroke-linejoin="round"/><rect x="1641.5" y="476.5" width="117" height="19" rx="4" fill="#1d1d1d" stroke="#393939" stroke-width="1"/><circle cx="1651" cy="484" r="4.2" fill="none" stroke="#e0e0e0" stroke-width="1.1"/><path d="M1654 487L1658.5 491.5" stroke="#e0e0e0" stroke-width="1.2"/><rect x="1891.5" y="476.5" width="19" height="19" rx="4" fill="#2a2a2a" stroke="#383838" stroke-width="1"/><path d="M1898.5 484.75L1901 487.25L1903.5 484.75" stroke="#e0e0e0" stroke-width="1.2" fill="none" stroke-linecap="round" stroke-linejoin="round"/><rect x="1479" y="507" width="27" height="28" rx="5" fill="#242424"/><rect x="1479" y="543" width="27" height="141" rx="5" fill="#242424"/><rect x="1479" y="690" width="27" height="28" rx="5" fill="#242424"/><rect x="1479" y="726" width="27" height="112" rx="5" fill="#242424"/><path d="M1485 728H1506V754H1485A5 5 0 0 1 1480 749V733A5 5 0 0 1 1485 728Z" fill="#303030"/><path d="M1488.5 513V518" stroke="#c8c8c8" stroke-width="0.9"/><circle cx="1488.5" cy="523.5" r="2.6" fill="#c8c8c8"/><path d="M1494.5 513.5V518.5A2.5 2.5 0 0 0 1499 518.5V513.5M1496.8 518V527.5" stroke="#c8c8c8" stroke-width="2" fill="none" stroke-linecap="round"/><path d="M1486 551H1499V561H1486Z" fill="none" stroke="#c8c8c8" stroke-width="1.4"/><rect x="1489" y="548.5" width="4" height="2.5" fill="#c8c8c8"/><path d="M1487.5 554H1495M1487.5 556.5H1495M1487.5 559H1495" stroke="#c8c8c8" stroke-width="0.8"/><path d="M1486 578H1500V583H1498V589H1488V583H1486Z" fill="#c8c8c8"/><path d="M1489.5 588L1492.5 584L1495.5 588Z" fill="#444"/><path d="M1486 608V618H1496M1488 606V616H1498" stroke="#c8c8c8" stroke-width="0.9" fill="none"/><rect x="1490" y="604" width="9" height="9" fill="none" stroke="#c8c8c8" stroke-width="1.1"/><path d="M1491 612L1494 607L1497 612Z" fill="#c8c8c8"/><path d="M1489 635L1486 641A3 3 0 0 0 1492 642Z" fill="#c8c8c8"/><circle cx="1496.5" cy="636.5" r="1.6" fill="#c8c8c8"/><circle cx="1494" cy="643.5" r="3" fill="none" stroke="#c8c8c8" stroke-width="1.2"/><circle cx="1493" cy="669.5" r="6" fill="none" stroke="#c0505a" stroke-width="1.3"/><path d="M1488 667Q1491 665 1492 668Q1493 671 1490 673M1494 664Q1497 666 1496 669Q1498 672 1497 674" stroke="#c0505a" stroke-width="1.4" fill="#c0505a" fill-opacity="0.6"/><path d="M1486.5 698H1499.5V701H1486.5ZM1487.5 702H1498.5V711H1487.5Z" fill="none" stroke="#e0e0e0" stroke-width="1.2"/><rect x="1491" y="704" width="4" height="1.5" fill="#e0e0e0"/><path d="M1486 734V731H1489M1497 731H1500V734M1500 742V745H1497M1489 745H1486V742" stroke="#d98c4a" stroke-width="1.1" fill="none"/><rect x="1488.5" y="733.5" width="9" height="9" fill="#e8a060"/><circle cx="1492.5" cy="769" r="3" fill="#6a9be8"/><path d="M1497.5 766A6 6 0 1 0 1497 773" stroke="#6a9be8" stroke-width="1.2" fill="none"/><circle cx="1498" cy="764" r="1.5" fill="#6a9be8"/><path d="M1487 800A5 5 0 0 0 1494 803L1499 791L1496 790L1487 794A5 5 0 0 0 1487 800Z" fill="none" stroke="#6a9be8" stroke-width="1.1"/><circle cx="1491" cy="797.5" r="3" fill="none" stroke="#6a9be8" stroke-width="1.1"/><circle cx="1491" cy="797.5" r="1.2" fill="#6a9be8"/><path d="M1490.5 818V827.5H1500M1490.5 827.5L1486 832" stroke="#21c4a0" stroke-width="1.3" fill="none"/><path d="M1490 855.0L1493 858.0L1496 855.0" stroke="#5a5a5a" stroke-width="1.2" fill="none" stroke-linecap="round" stroke-linejoin="round"/><path d="M1517 513V510H1520M1528 510H1531V513M1531 521V524H1528M1520 524H1517V521" stroke="#e6e6e6" stroke-width="1.1" fill="none"/><rect x="1519.5" y="512.5" width="9" height="9" fill="#e6e6e6"/><path d="M1893 524L1897.5 519.5M1897 512L1905 520M1898 513L1896 517L1900.5 521.5L1904 519.5Z" stroke="#a8a8a8" stroke-width="1.1" fill="none"/><rect x="1514.5" y="543.5" width="395" height="19" rx="4" fill="#1d1d1d" stroke="#2a2a2a" stroke-width="1"/><path d="M1514.5 547.5A4 4 0 0 1 1518.5 543.5H1546V562.5H1518.5A4 4 0 0 1 1514.5 558.5Z" fill="#2a2a2a"/><path d="M1519 549V546H1522M1530 546H1533V549M1533 557V560H1530M1522 560H1519V557" stroke="#e6e6e6" stroke-width="1.1" fill="none"/><rect x="1521.5" y="548.5" width="9" height="9" fill="#e6e6e6"/><path d="M1537.2 552.35L1539.5 554.65L1541.8 552.35" stroke="#cfcfcf" stroke-width="1.2" fill="none" stroke-linecap="round" stroke-linejoin="round"/><rect x="1514.5" y="573.5" width="395" height="304" rx="5" fill="#3d3d3d" stroke="#454545" stroke-width="1"/><path d="M1524.1000000000001 584.95L1527.4 588.25L1530.7 584.95" stroke="#dcdcdc" stroke-width="1.1" fill="none" stroke-linecap="round" stroke-linejoin="round"/><rect x="1890.0" y="585" width="1.2" height="1.2" fill="#6a6a6a"/><rect x="1890.0" y="588" width="1.2" height="1.2" fill="#6a6a6a"/><rect x="1893.3" y="585" width="1.2" height="1.2" fill="#6a6a6a"/><rect x="1893.3" y="588" width="1.2" height="1.2" fill="#6a6a6a"/><rect x="1896.6" y="585" width="1.2" height="1.2" fill="#6a6a6a"/><rect x="1896.6" y="588" width="1.2" height="1.2" fill="#6a6a6a"/><rect x="1899.9" y="585" width="1.2" height="1.2" fill="#6a6a6a"/><rect x="1899.9" y="588" width="1.2" height="1.2" fill="#6a6a6a"/><path d="M1675 607H1857A4 4 0 0 1 1861 611V625A0 0 0 0 1 1861 625H1671A0 0 0 0 1 1671 625V611A4 4 0 0 1 1675 607Z" fill="#545454"/><path d="M1671 626.5H1861A0 0 0 0 1 1861 626.5V644.5A0 0 0 0 1 1861 644.5H1671A0 0 0 0 1 1671 644.5V626.5A0 0 0 0 1 1671 626.5Z" fill="#545454"/><path d="M1671 646H1861A0 0 0 0 1 1861 646V660A4 4 0 0 1 1857 664H1675A4 4 0 0 1 1671 660V646A0 0 0 0 1 1671 646Z" fill="#545454"/><rect x="1868.0" y="616.0" width="9" height="6" fill="none" stroke="#b0b0b0" stroke-width="1"/><path d="M1868.8 616.0V613.0A3.3 3.3 0 0 1 1875.4 612.5" stroke="#b0b0b0" stroke-width="1" fill="none"/><rect x="1872.0" y="618.0" width="1" height="2" fill="#b0b0b0"/><circle cx="1891.8" cy="616" r="2" fill="#e6e6e6"/><rect x="1868.0" y="635.5" width="9" height="6" fill="none" stroke="#b0b0b0" stroke-width="1"/><path d="M1868.8 635.5V632.5A3.3 3.3 0 0 1 1875.4 632.0" stroke="#b0b0b0" stroke-width="1" fill="none"/><rect x="1872.0" y="637.5" width="1" height="2" fill="#b0b0b0"/><circle cx="1891.8" cy="635.5" r="2" fill="#e6e6e6"/><rect x="1868.0" y="655.0" width="9" height="6" fill="none" stroke="#b0b0b0" stroke-width="1"/><path d="M1868.8 655.0V652.0A3.3 3.3 0 0 1 1875.4 651.5" stroke="#b0b0b0" stroke-width="1" fill="none"/><rect x="1872.0" y="657.0" width="1" height="2" fill="#b0b0b0"/><circle cx="1891.8" cy="655" r="2" fill="#e6e6e6"/><path d="M1675 672.4H1857A4 4 0 0 1 1861 676.4V690.4A0 0 0 0 1 1861 690.4H1671A0 0 0 0 1 1671 690.4V676.4A4 4 0 0 1 1675 672.4Z" fill="#545454"/><path d="M1671 691.5H1861A0 0 0 0 1 1861 691.5V709.5A0 0 0 0 1 1861 709.5H1671A0 0 0 0 1 1671 709.5V691.5A0 0 0 0 1 1671 691.5Z" fill="#545454"/><path d="M1671 711.3H1861A0 0 0 0 1 1861 711.3V725.3A4 4 0 0 1 1857 729.3H1675A4 4 0 0 1 1671 725.3V711.3A0 0 0 0 1 1671 711.3Z" fill="#545454"/><rect x="1868.0" y="681.4" width="9" height="6" fill="none" stroke="#b0b0b0" stroke-width="1"/><path d="M1868.8 681.4V678.4A3.3 3.3 0 0 1 1875.4 677.9" stroke="#b0b0b0" stroke-width="1" fill="none"/><rect x="1872.0" y="683.4" width="1" height="2" fill="#b0b0b0"/><circle cx="1891.8" cy="681.4" r="2" fill="#e6e6e6"/><rect x="1868.0" y="700.5" width="9" height="6" fill="none" stroke="#b0b0b0" stroke-width="1"/><path d="M1868.8 700.5V697.5A3.3 3.3 0 0 1 1875.4 697.0" stroke="#b0b0b0" stroke-width="1" fill="none"/><rect x="1872.0" y="702.5" width="1" height="2" fill="#b0b0b0"/><circle cx="1891.8" cy="700.5" r="2" fill="#e6e6e6"/><rect x="1868.0" y="720.3" width="9" height="6" fill="none" stroke="#b0b0b0" stroke-width="1"/><path d="M1868.8 720.3V717.3A3.3 3.3 0 0 1 1875.4 716.8" stroke="#b0b0b0" stroke-width="1" fill="none"/><rect x="1872.0" y="722.3" width="1" height="2" fill="#b0b0b0"/><circle cx="1891.8" cy="720.3" r="2" fill="#e6e6e6"/><path d="M1675 762.2H1857A4 4 0 0 1 1861 766.2V780.2A0 0 0 0 1 1861 780.2H1671A0 0 0 0 1 1671 780.2V766.2A4 4 0 0 1 1675 762.2Z" fill="#545454"/><path d="M1671 781.6H1861A0 0 0 0 1 1861 781.6V799.6A0 0 0 0 1 1861 799.6H1671A0 0 0 0 1 1671 799.6V781.6A0 0 0 0 1 1671 781.6Z" fill="#545454"/><path d="M1671 801.5H1861A0 0 0 0 1 1861 801.5V815.5A4 4 0 0 1 1857 819.5H1675A4 4 0 0 1 1671 815.5V801.5A0 0 0 0 1 1671 801.5Z" fill="#545454"/><rect x="1868.0" y="771.2" width="9" height="6" fill="none" stroke="#b0b0b0" stroke-width="1"/><path d="M1868.8 771.2V768.2A3.3 3.3 0 0 1 1875.4 767.7" stroke="#b0b0b0" stroke-width="1" fill="none"/><rect x="1872.0" y="773.2" width="1" height="2" fill="#b0b0b0"/><circle cx="1891.8" cy="771.2" r="2" fill="#e6e6e6"/><rect x="1868.0" y="790.6" width="9" height="6" fill="none" stroke="#b0b0b0" stroke-width="1"/><path d="M1868.8 790.6V787.6A3.3 3.3 0 0 1 1875.4 787.1" stroke="#b0b0b0" stroke-width="1" fill="none"/><rect x="1872.0" y="792.6" width="1" height="2" fill="#b0b0b0"/><circle cx="1891.8" cy="790.6" r="2" fill="#e6e6e6"/><rect x="1868.0" y="810.5" width="9" height="6" fill="none" stroke="#b0b0b0" stroke-width="1"/><path d="M1868.8 810.5V807.5A3.3 3.3 0 0 1 1875.4 807.0" stroke="#b0b0b0" stroke-width="1" fill="none"/><rect x="1872.0" y="812.5" width="1" height="2" fill="#b0b0b0"/><circle cx="1891.8" cy="810.5" r="2" fill="#e6e6e6"/><rect x="1671" y="737.4" width="190" height="18" rx="4" fill="#282828"/><path d="M1850.5 745.0L1853.5 748.0L1856.5 745.0" stroke="#e0e0e0" stroke-width="1.2" fill="none" stroke-linecap="round" stroke-linejoin="round"/><circle cx="1891.8" cy="746" r="2" fill="#e6e6e6"/><path d="M1539.7 838.1L1543.1000000000001 841.5L1539.7 844.9" stroke="#cfcfcf" stroke-width="1.1" fill="none" stroke-linecap="round" stroke-linejoin="round"/><path d="M1539.7 863.6L1543.1000000000001 867L1539.7 870.4" stroke="#cfcfcf" stroke-width="1.1" fill="none" stroke-linecap="round" stroke-linejoin="round"/><rect x="1514.5" y="881.5" width="395" height="24" rx="5" fill="#3d3d3d" stroke="#454545" stroke-width="1"/><path d="M1525.6 890.1L1529.0 893.5L1525.6 896.9" stroke="#cfcfcf" stroke-width="1.1" fill="none" stroke-linecap="round" stroke-linejoin="round"/><rect x="1890.0" y="891.5" width="1.2" height="1.2" fill="#6a6a6a"/><rect x="1890.0" y="894.5" width="1.2" height="1.2" fill="#6a6a6a"/><rect x="1893.3" y="891.5" width="1.2" height="1.2" fill="#6a6a6a"/><rect x="1893.3" y="894.5" width="1.2" height="1.2" fill="#6a6a6a"/><rect x="1896.6" y="891.5" width="1.2" height="1.2" fill="#6a6a6a"/><rect x="1896.6" y="894.5" width="1.2" height="1.2" fill="#6a6a6a"/><rect x="1899.9" y="891.5" width="1.2" height="1.2" fill="#6a6a6a"/><rect x="1899.9" y="894.5" width="1.2" height="1.2" fill="#6a6a6a"/><rect x="1514.5" y="908.6" width="395" height="24" rx="5" fill="#3d3d3d" stroke="#454545" stroke-width="1"/><path d="M1525.6 917.2L1529.0 920.6L1525.6 924.0" stroke="#cfcfcf" stroke-width="1.1" fill="none" stroke-linecap="round" stroke-linejoin="round"/><rect x="1890.0" y="918.6" width="1.2" height="1.2" fill="#6a6a6a"/><rect x="1890.0" y="921.6" width="1.2" height="1.2" fill="#6a6a6a"/><rect x="1893.3" y="918.6" width="1.2" height="1.2" fill="#6a6a6a"/><rect x="1893.3" y="921.6" width="1.2" height="1.2" fill="#6a6a6a"/><rect x="1896.6" y="918.6" width="1.2" height="1.2" fill="#6a6a6a"/><rect x="1896.6" y="921.6" width="1.2" height="1.2" fill="#6a6a6a"/><rect x="1899.9" y="918.6" width="1.2" height="1.2" fill="#6a6a6a"/><rect x="1899.9" y="921.6" width="1.2" height="1.2" fill="#6a6a6a"/><rect x="1514.5" y="935.7" width="395" height="24" rx="5" fill="#3d3d3d" stroke="#454545" stroke-width="1"/><path d="M1525.6 944.3000000000001L1529.0 947.7L1525.6 951.1" stroke="#cfcfcf" stroke-width="1.1" fill="none" stroke-linecap="round" stroke-linejoin="round"/><rect x="1890.0" y="945.7" width="1.2" height="1.2" fill="#6a6a6a"/><rect x="1890.0" y="948.7" width="1.2" height="1.2" fill="#6a6a6a"/><rect x="1893.3" y="945.7" width="1.2" height="1.2" fill="#6a6a6a"/><rect x="1893.3" y="948.7" width="1.2" height="1.2" fill="#6a6a6a"/><rect x="1896.6" y="945.7" width="1.2" height="1.2" fill="#6a6a6a"/><rect x="1896.6" y="948.7" width="1.2" height="1.2" fill="#6a6a6a"/><rect x="1899.9" y="945.7" width="1.2" height="1.2" fill="#6a6a6a"/><rect x="1899.9" y="948.7" width="1.2" height="1.2" fill="#6a6a6a"/><rect x="1514.5" y="962.8" width="395" height="24" rx="5" fill="#3d3d3d" stroke="#454545" stroke-width="1"/><path d="M1525.6 971.4L1529.0 974.8L1525.6 978.1999999999999" stroke="#cfcfcf" stroke-width="1.1" fill="none" stroke-linecap="round" stroke-linejoin="round"/><rect x="1890.0" y="972.8" width="1.2" height="1.2" fill="#6a6a6a"/><rect x="1890.0" y="975.8" width="1.2" height="1.2" fill="#6a6a6a"/><rect x="1893.3" y="972.8" width="1.2" height="1.2" fill="#6a6a6a"/><rect x="1893.3" y="975.8" width="1.2" height="1.2" fill="#6a6a6a"/><rect x="1896.6" y="972.8" width="1.2" height="1.2" fill="#6a6a6a"/><rect x="1896.6" y="975.8" width="1.2" height="1.2" fill="#6a6a6a"/><rect x="1899.9" y="972.8" width="1.2" height="1.2" fill="#6a6a6a"/><rect x="1899.9" y="975.8" width="1.2" height="1.2" fill="#6a6a6a"/><rect x="1514.5" y="989.9" width="395" height="24" rx="5" fill="#3d3d3d" stroke="#454545" stroke-width="1"/><path d="M1525.6 998.5L1529.0 1001.9L1525.6 1005.3" stroke="#cfcfcf" stroke-width="1.1" fill="none" stroke-linecap="round" stroke-linejoin="round"/><rect x="1890.0" y="999.9" width="1.2" height="1.2" fill="#6a6a6a"/><rect x="1890.0" y="1002.9" width="1.2" height="1.2" fill="#6a6a6a"/><rect x="1893.3" y="999.9" width="1.2" height="1.2" fill="#6a6a6a"/><rect x="1893.3" y="1002.9" width="1.2" height="1.2" fill="#6a6a6a"/><rect x="1896.6" y="999.9" width="1.2" height="1.2" fill="#6a6a6a"/><rect x="1896.6" y="1002.9" width="1.2" height="1.2" fill="#6a6a6a"/><rect x="1899.9" y="999.9" width="1.2" height="1.2" fill="#6a6a6a"/><rect x="1899.9" y="1002.9" width="1.2" height="1.2" fill="#6a6a6a"/><rect x="1514.5" y="1017.0" width="395" height="24" rx="5" fill="#3d3d3d" stroke="#454545" stroke-width="1"/><path d="M1525.6 1025.6L1529.0 1029.0L1525.6 1032.4" stroke="#cfcfcf" stroke-width="1.1" fill="none" stroke-linecap="round" stroke-linejoin="round"/><rect x="1890.0" y="1027.0" width="1.2" height="1.2" fill="#6a6a6a"/><rect x="1890.0" y="1030.0" width="1.2" height="1.2" fill="#6a6a6a"/><rect x="1893.3" y="1027.0" width="1.2" height="1.2" fill="#6a6a6a"/><rect x="1893.3" y="1030.0" width="1.2" height="1.2" fill="#6a6a6a"/><rect x="1896.6" y="1027.0" width="1.2" height="1.2" fill="#6a6a6a"/><rect x="1896.6" y="1030.0" width="1.2" height="1.2" fill="#6a6a6a"/><rect x="1899.9" y="1027.0" width="1.2" height="1.2" fill="#6a6a6a"/><rect x="1899.9" y="1030.0" width="1.2" height="1.2" fill="#6a6a6a"/><rect x="1514.5" y="1044.1" width="395" height="24" rx="5" fill="#3d3d3d" stroke="#454545" stroke-width="1"/><path d="M1525.6 1052.6999999999998L1529.0 1056.1L1525.6 1059.5" stroke="#cfcfcf" stroke-width="1.1" fill="none" stroke-linecap="round" stroke-linejoin="round"/><rect x="1890.0" y="1054.1" width="1.2" height="1.2" fill="#6a6a6a"/><rect x="1890.0" y="1057.1" width="1.2" height="1.2" fill="#6a6a6a"/><rect x="1893.3" y="1054.1" width="1.2" height="1.2" fill="#6a6a6a"/><rect x="1893.3" y="1057.1" width="1.2" height="1.2" fill="#6a6a6a"/><rect x="1896.6" y="1054.1" width="1.2" height="1.2" fill="#6a6a6a"/><rect x="1896.6" y="1057.1" width="1.2" height="1.2" fill="#6a6a6a"/><rect x="1899.9" y="1054.1" width="1.2" height="1.2" fill="#6a6a6a"/><rect x="1899.9" y="1057.1" width="1.2" height="1.2" fill="#6a6a6a"/><rect x="1912" y="503" width="3" height="504" rx="1.5" fill="#4a4a4a"/></svg>
<div style="position:absolute;left:1540px;top:509.64px;line-height:14px;font-size:12px;color:#e6e6e6;font-weight:normal;white-space:nowrap;">J6</div>
<div style="position:absolute;left:1664px;top:478.34px;line-height:14px;font-size:12px;color:#7a7a7a;font-weight:normal;white-space:nowrap;">Search</div>
<div style="position:absolute;left:1553px;top:546.14px;line-height:14px;font-size:12px;color:#e6e6e6;font-weight:normal;white-space:nowrap;">J6</div>
<div style="position:absolute;left:1536.5px;top:579.04px;line-height:14px;font-size:12px;color:#e6e6e6;font-weight:normal;white-space:nowrap;">Transform</div>
<div style="position:absolute;right:259.5px;top:609.24px;line-height:14px;font-size:12px;color:#dcdcdc;font-weight:normal;white-space:nowrap;text-align:right;">Location X</div>
<div style="position:absolute;right:259.5px;top:628.74px;line-height:14px;font-size:12px;color:#dcdcdc;font-weight:normal;white-space:nowrap;text-align:right;">Y</div>
<div style="position:absolute;right:259.5px;top:648.24px;line-height:14px;font-size:12px;color:#dcdcdc;font-weight:normal;white-space:nowrap;text-align:right;">Z</div>
<div style="position:absolute;right:259.5px;top:674.64px;line-height:14px;font-size:12px;color:#dcdcdc;font-weight:normal;white-space:nowrap;text-align:right;">Rotation X</div>
<div style="position:absolute;right:259.5px;top:693.74px;line-height:14px;font-size:12px;color:#dcdcdc;font-weight:normal;white-space:nowrap;text-align:right;">Y</div>
<div style="position:absolute;right:259.5px;top:713.54px;line-height:14px;font-size:12px;color:#dcdcdc;font-weight:normal;white-space:nowrap;text-align:right;">Z</div>
<div style="position:absolute;right:259.5px;top:764.44px;line-height:14px;font-size:12px;color:#dcdcdc;font-weight:normal;white-space:nowrap;text-align:right;">Scale X</div>
<div style="position:absolute;right:259.5px;top:783.84px;line-height:14px;font-size:12px;color:#dcdcdc;font-weight:normal;white-space:nowrap;text-align:right;">Y</div>
<div style="position:absolute;right:259.5px;top:803.74px;line-height:14px;font-size:12px;color:#dcdcdc;font-weight:normal;white-space:nowrap;text-align:right;">Z</div>
<div style="position:absolute;left:1366px;width:800px;top:609.24px;line-height:14px;font-size:12px;color:#e6e6e6;font-weight:normal;white-space:nowrap;text-align:center;">0 m</div>
<div style="position:absolute;left:1366px;width:800px;top:628.74px;line-height:14px;font-size:12px;color:#e6e6e6;font-weight:normal;white-space:nowrap;text-align:center;">0 m</div>
<div style="position:absolute;left:1366px;width:800px;top:648.24px;line-height:14px;font-size:12px;color:#e6e6e6;font-weight:normal;white-space:nowrap;text-align:center;">0 m</div>
<div style="position:absolute;left:1366px;width:800px;top:674.64px;line-height:14px;font-size:12px;color:#e6e6e6;font-weight:normal;white-space:nowrap;text-align:center;">0°</div>
<div style="position:absolute;left:1366px;width:800px;top:693.74px;line-height:14px;font-size:12px;color:#e6e6e6;font-weight:normal;white-space:nowrap;text-align:center;">0°</div>
<div style="position:absolute;left:1366px;width:800px;top:713.54px;line-height:14px;font-size:12px;color:#e6e6e6;font-weight:normal;white-space:nowrap;text-align:center;">0°</div>
<div style="position:absolute;left:1366px;width:800px;top:764.44px;line-height:14px;font-size:12px;color:#e6e6e6;font-weight:normal;white-space:nowrap;text-align:center;">1.000</div>
<div style="position:absolute;left:1366px;width:800px;top:783.84px;line-height:14px;font-size:12px;color:#e6e6e6;font-weight:normal;white-space:nowrap;text-align:center;">1.000</div>
<div style="position:absolute;left:1366px;width:800px;top:803.74px;line-height:14px;font-size:12px;color:#e6e6e6;font-weight:normal;white-space:nowrap;text-align:center;">1.000</div>
<div style="position:absolute;right:259.5px;top:739.64px;line-height:14px;font-size:12px;color:#dcdcdc;font-weight:normal;white-space:nowrap;text-align:right;">Mode</div>
<div style="position:absolute;left:1678px;top:739.64px;line-height:14px;font-size:12px;color:#e6e6e6;font-weight:normal;white-space:nowrap;">XYZ Euler</div>
<div style="position:absolute;left:1550.5px;top:834.94px;line-height:14px;font-size:12px;color:#dcdcdc;font-weight:normal;white-space:nowrap;">Delta Transform</div>
<div style="position:absolute;left:1550.5px;top:860.34px;line-height:14px;font-size:12px;color:#dcdcdc;font-weight:normal;white-space:nowrap;">Parent Inverse Transform</div>
<div style="position:absolute;left:1536.6px;top:887.34px;line-height:14px;font-size:12px;color:#dcdcdc;font-weight:normal;white-space:nowrap;">Relations</div>
<div style="position:absolute;left:1536.6px;top:914.44px;line-height:14px;font-size:12px;color:#dcdcdc;font-weight:normal;white-space:nowrap;">Collections</div>
<div style="position:absolute;left:1536.6px;top:941.54px;line-height:14px;font-size:12px;color:#dcdcdc;font-weight:normal;white-space:nowrap;">Instancing</div>
<div style="position:absolute;left:1536.6px;top:968.64px;line-height:14px;font-size:12px;color:#dcdcdc;font-weight:normal;white-space:nowrap;">Motion Paths</div>
<div style="position:absolute;left:1536.6px;top:995.74px;line-height:14px;font-size:12px;color:#dcdcdc;font-weight:normal;white-space:nowrap;">Visibility</div>
<div style="position:absolute;left:1536.6px;top:1022.84px;line-height:14px;font-size:12px;color:#dcdcdc;font-weight:normal;white-space:nowrap;">Viewport Display</div>
<div style="position:absolute;left:1478px;top:1043px;width:439px;height:13px;overflow:hidden"><div style="position:absolute;left:58.6px;top:4.5px;font-size:12px;line-height:14px;color:#dcdcdc;white-space:nowrap">Animation</div></div>
<svg style="position:absolute;left:0px;top:0px;overflow:visible;" width="1920" height="1080" viewBox="0 0 1920 1080"><rect x="2.5" y="986.5" width="1471" height="70" rx="6" fill="#2e2e2e" stroke="#373737" stroke-width="1"/><path d="M3 1012V993A6 6 0 0 1 9 987H1467A6 6 0 0 1 1473 993V1012Z" fill="#303030"/><rect x="3" y="1012" width="1470" height="23" fill="#1f1f1f"/><rect x="18.0" y="1035" width="1" height="21" fill="#282828"/><rect x="50.8" y="1035" width="1" height="21" fill="#1c1c1c"/><rect x="83.6" y="1035" width="1" height="21" fill="#282828"/><rect x="116.5" y="1035" width="1" height="21" fill="#1c1c1c"/><rect x="149.3" y="1035" width="1" height="21" fill="#282828"/><rect x="182.1" y="1035" width="1" height="21" fill="#1c1c1c"/><rect x="215.0" y="1035" width="1" height="21" fill="#282828"/><rect x="247.8" y="1035" width="1" height="21" fill="#1c1c1c"/><rect x="280.6" y="1035" width="1" height="21" fill="#282828"/><rect x="313.4" y="1035" width="1" height="21" fill="#1c1c1c"/><rect x="346.3" y="1035" width="1" height="21" fill="#282828"/><rect x="379.1" y="1035" width="1" height="21" fill="#1c1c1c"/><rect x="411.9" y="1035" width="1" height="21" fill="#282828"/><rect x="444.8" y="1035" width="1" height="21" fill="#1c1c1c"/><rect x="477.6" y="1035" width="1" height="21" fill="#282828"/><rect x="510.4" y="1035" width="1" height="21" fill="#1c1c1c"/><rect x="543.3" y="1035" width="1" height="21" fill="#282828"/><rect x="576.1" y="1035" width="1" height="21" fill="#1c1c1c"/><rect x="608.9" y="1035" width="1" height="21" fill="#282828"/><rect x="641.7" y="1035" width="1" height="21" fill="#1c1c1c"/><rect x="674.6" y="1035" width="1" height="21" fill="#282828"/><rect x="707.4" y="1035" width="1" height="21" fill="#1c1c1c"/><rect x="740.2" y="1035" width="1" height="21" fill="#282828"/><rect x="773.1" y="1035" width="1" height="21" fill="#1c1c1c"/><rect x="805.9" y="1035" width="1" height="21" fill="#282828"/><rect x="838.7" y="1035" width="1" height="21" fill="#1c1c1c"/><rect x="871.6" y="1035" width="1" height="21" fill="#282828"/><rect x="904.4" y="1035" width="1" height="21" fill="#1c1c1c"/><rect x="937.2" y="1035" width="1" height="21" fill="#282828"/><rect x="970.0" y="1035" width="1" height="21" fill="#1c1c1c"/><rect x="1002.9" y="1035" width="1" height="21" fill="#282828"/><rect x="1035.7" y="1035" width="1" height="21" fill="#1c1c1c"/><rect x="1068.5" y="1035" width="1" height="21" fill="#282828"/><rect x="1101.4" y="1035" width="1" height="21" fill="#1c1c1c"/><rect x="1134.2" y="1035" width="1" height="21" fill="#282828"/><rect x="1167.0" y="1035" width="1" height="21" fill="#1c1c1c"/><rect x="1199.9" y="1035" width="1" height="21" fill="#282828"/><rect x="1232.7" y="1035" width="1" height="21" fill="#1c1c1c"/><rect x="1265.5" y="1035" width="1" height="21" fill="#282828"/><rect x="1298.3" y="1035" width="1" height="21" fill="#1c1c1c"/><rect x="1331.2" y="1035" width="1" height="21" fill="#282828"/><rect x="1364.0" y="1035" width="1" height="21" fill="#1c1c1c"/><rect x="1396.8" y="1035" width="1" height="21" fill="#282828"/><rect x="1429.7" y="1035" width="1" height="21" fill="#1c1c1c"/><rect x="1462.5" y="1035" width="1" height="21" fill="#282828"/><rect x="1419.2" y="1035" width="53.8" height="21" fill="#1e1e1e" fill-opacity="0.55"/><rect x="1429.7" y="1035" width="1" height="21" fill="#1c1c1c"/><rect x="1462.5" y="1035" width="1" height="21" fill="#1c1c1c"/><rect x="1418.6" y="1035" width="1.3" height="21" fill="#0a0a0a"/><rect x="14" y="1050.5" width="1450" height="3.2" rx="1.6" fill="#3a3a3a" fill-opacity="0.8"/><rect x="1468.5" y="1037" width="2.5" height="18" rx="1.2" fill="#3a3a3a"/><path d="M3 1034H15V1056H9A6 6 0 0 1 3 1050Z" fill="#282828"/><path d="M4.5 1040L7.5 1043L4.5 1046" stroke="#8a8a8a" stroke-width="1.1" fill="none" stroke-linecap="round" stroke-linejoin="round"/><rect x="55.6" y="1030" width="2.4" height="26" fill="#4772b3"/><path d="M45.3 1017A3 3 0 0 1 48.3 1014H65.3A3 3 0 0 1 68.3 1017V1030A2 2 0 0 1 66.3 1032H61.8L56.8 1038L51.8 1032H47.3A2 2 0 0 1 45.3 1030Z" fill="#4772b3"/><rect x="10.5" y="989.5" width="31" height="19" rx="4" fill="#2a2a2a" stroke="#383838" stroke-width="1"/><circle cx="22" cy="999" r="5.8" fill="#e6e6e6"/><path d="M23.5 995.5L20.5 999L23.5 1002.5" stroke="#2a2a2a" stroke-width="1.5" fill="none"/><path d="M33.2 998.35L35.5 1000.65L37.8 998.35" stroke="#cfcfcf" stroke-width="1.2" fill="none" stroke-linecap="round" stroke-linejoin="round"/><rect x="144.5" y="989.5" width="71" height="19" rx="4" fill="#2a2a2a" stroke="#383838" stroke-width="1"/><path d="M206.5 998.25L209 1000.75L211.5 998.25" stroke="#cfcfcf" stroke-width="1.2" fill="none" stroke-linecap="round" stroke-linejoin="round"/><rect x="591" y="989.5" width="38" height="18.5" rx="4" fill="#2a2a2a"/><path d="M591 993.5A4 4 0 0 1 595 989.5H609.5V1008H595A4 4 0 0 1 591 1004Z" fill="#545454"/><circle cx="600.2" cy="998.8" r="4.6" fill="none" stroke="#d8d8d8" stroke-width="1"/><path d="M616.7 998.35L619 1000.65L621.3 998.35" stroke="#5a5a5a" stroke-width="1.2" fill="none" stroke-linecap="round" stroke-linejoin="round"/><rect x="636" y="989.5" width="118.2" height="18.5" rx="4" fill="#545454"/><rect x="655.3" y="989.5" width="0.8" height="18.5" fill="#484848"/><rect x="675.0" y="989.5" width="0.8" height="18.5" fill="#484848"/><rect x="694.7" y="989.5" width="0.8" height="18.5" fill="#484848"/><rect x="714.4" y="989.5" width="0.8" height="18.5" fill="#484848"/><rect x="734.1" y="989.5" width="0.8" height="18.5" fill="#484848"/><g fill="#e6e6e6"><rect x="641.5" y="994" width="1.6" height="9.5"/><path d="M651 994V1003.5L644 998.75Z"/><path d="M657.5 998.75L661 995L664.5 998.75L661 1002.5Z"/><path d="M671.5 995V1002.5L666.5 998.75Z"/><path d="M690 993.5V1004L682 998.75Z"/><path d="M701 993.5V1004L709 998.75Z"/><path d="M716.5 995V1002.5L721.5 998.75Z"/><path d="M723 998.75L726.5 995L730 998.75L726.5 1002.5Z"/><path d="M741 994V1003.5L748 998.75Z"/><rect x="748.9" y="994" width="1.6" height="9.5"/></g><rect x="761" y="989.5" width="58" height="18.5" rx="4" fill="#2a2a2a"/><path d="M761 993.5A4 4 0 0 1 765 989.5H799.4V1008H765A4 4 0 0 1 761 1004Z" fill="#545454"/><rect x="779.3" y="989.5" width="0.8" height="18.5" fill="#484848"/><g fill="#e6e6e6"><path d="M772.5 994.5V1003L765.5 998.75Z"/><rect x="774" y="994.5" width="1.6" height="8.5"/><rect x="783.5" y="994.5" width="1.6" height="8.5"/><path d="M787 994.5V1003L794 998.75Z"/></g><path d="M807.0 998.25L809.5 1000.75L812.0 998.25" stroke="#e0e0e0" stroke-width="1.2" fill="none" stroke-linecap="round" stroke-linejoin="round"/><rect x="825.8" y="989.5" width="38.6" height="18.5" rx="4" fill="#2a2a2a"/><path d="M825.8 993.5A4 4 0 0 1 829.8 989.5H844.7V1008H829.8A4 4 0 0 1 825.8 1004Z" fill="#545454"/><path d="M830 1002V998A5.2 5.2 0 0 1 840.4 998V1002M832.5 1002V998A2.7 2.7 0 0 1 837.9 998V1002" stroke="#c8c8c8" stroke-width="0.9" fill="none"/><rect x="829.5" y="1004" width="11.5" height="1" fill="#c8c8c8"/><path d="M852.0 998.25L854.5 1000.75L857.0 998.25" stroke="#e0e0e0" stroke-width="1.2" fill="none" stroke-linecap="round" stroke-linejoin="round"/><rect x="1136" y="989.75" width="73" height="18.25" rx="4" fill="#545454"/><rect x="1215.6" y="989.75" width="193.2" height="18.25" rx="4" fill="#545454"/><path d="M1215.6 993.75A4 4 0 0 1 1219.6 989.75H1234.8V1008H1219.6A4 4 0 0 1 1215.6 1004Z" fill="#4a4a4a"/><rect x="1234.5" y="989.75" width="0.8" height="18.25" fill="#444"/><rect x="1323.6" y="989.75" width="0.8" height="18.25" fill="#444"/><circle cx="1225" cy="1000" r="5" fill="none" stroke="#d8d8d8" stroke-width="1.1"/><path d="M1225 997V1000.5H1227.5M1223 993.5H1227M1229.5 994.5L1231 993" stroke="#d8d8d8" stroke-width="1" fill="none"/><rect x="1427" y="989.75" width="37.6" height="18.25" rx="4" fill="#2a2a2a"/><path d="M1427 993.75A4 4 0 0 1 1431 989.75H1444.8V1008H1431A4 4 0 0 1 1427 1004Z" fill="#4772b3"/><path d="M1428.8 998.7A5 5 0 0 0 1437.3 1004.6" stroke="#f0f0f0" stroke-width="1.4" fill="none"/><circle cx="1436.9" cy="997.6" r="4.5" fill="#f0f0f0"/><path d="M1452.5 998.25L1455 1000.75L1457.5 998.25" stroke="#e0e0e0" stroke-width="1.2" fill="none" stroke-linecap="round" stroke-linejoin="round"/><g stroke="#8a8a8a" stroke-width="1" fill="none"><circle cx="1861" cy="1069" r="5.8"/><ellipse cx="1861" cy="1069" rx="2.6" ry="5.8"/><path d="M1855.2 1069H1866.8M1856 1066H1866M1856 1072H1866M1855 1063L1867 1075"/></g></svg>
<div style="position:absolute;left:53.9px;top:992.14px;line-height:14px;font-size:12px;color:#e2e2e2;font-weight:normal;white-space:nowrap;">View</div>
<div style="position:absolute;left:95px;top:992.14px;line-height:14px;font-size:12px;color:#e2e2e2;font-weight:normal;white-space:nowrap;">Marker</div>
<div style="position:absolute;left:152.3px;top:992.14px;line-height:14px;font-size:12px;color:#e6e6e6;font-weight:normal;white-space:nowrap;">Playback</div>
<div style="position:absolute;left:771.5999999999999px;width:800px;top:992.14px;line-height:14px;font-size:12px;color:#e6e6e6;font-weight:normal;white-space:nowrap;text-align:center;">1</div>
<div style="position:absolute;left:1250.3px;top:992.14px;line-height:14px;font-size:12px;color:#e6e6e6;font-weight:normal;white-space:nowrap;">Start</div>
<div style="position:absolute;right:610.5999999999999px;top:992.14px;line-height:14px;font-size:12px;color:#e6e6e6;font-weight:normal;white-space:nowrap;text-align:right;">1</div>
<div style="position:absolute;left:1339.4px;top:992.14px;line-height:14px;font-size:12px;color:#e6e6e6;font-weight:normal;white-space:nowrap;">End</div>
<div style="position:absolute;right:524.4000000000001px;top:992.14px;line-height:14px;font-size:12px;color:#e6e6e6;font-weight:normal;white-space:nowrap;text-align:right;">250</div>
<div style="position:absolute;left:-283.0px;width:800px;top:1018.19px;line-height:13px;font-size:11px;color:#a8a8a8;font-weight:normal;white-space:nowrap;text-align:center;">12</div>
<div style="position:absolute;left:-217.4px;width:800px;top:1018.19px;line-height:13px;font-size:11px;color:#a8a8a8;font-weight:normal;white-space:nowrap;text-align:center;">24</div>
<div style="position:absolute;left:-151.7px;width:800px;top:1018.19px;line-height:13px;font-size:11px;color:#a8a8a8;font-weight:normal;white-space:nowrap;text-align:center;">36</div>
<div style="position:absolute;left:-86.10000000000002px;width:800px;top:1018.19px;line-height:13px;font-size:11px;color:#a8a8a8;font-weight:normal;white-space:nowrap;text-align:center;">48</div>
<div style="position:absolute;left:-20.399999999999977px;width:800px;top:1018.19px;line-height:13px;font-size:11px;color:#a8a8a8;font-weight:normal;white-space:nowrap;text-align:center;">60</div>
<div style="position:absolute;left:45.30000000000001px;width:800px;top:1018.19px;line-height:13px;font-size:11px;color:#a8a8a8;font-weight:normal;white-space:nowrap;text-align:center;">72</div>
<div style="position:absolute;left:110.89999999999998px;width:800px;top:1018.19px;line-height:13px;font-size:11px;color:#a8a8a8;font-weight:normal;white-space:nowrap;text-align:center;">84</div>
<div style="position:absolute;left:176.60000000000002px;width:800px;top:1018.19px;line-height:13px;font-size:11px;color:#a8a8a8;font-weight:normal;white-space:nowrap;text-align:center;">96</div>
<div style="position:absolute;left:242.20000000000005px;width:800px;top:1018.19px;line-height:13px;font-size:11px;color:#a8a8a8;font-weight:normal;white-space:nowrap;text-align:center;">108</div>
<div style="position:absolute;left:307.9px;width:800px;top:1018.19px;line-height:13px;font-size:11px;color:#a8a8a8;font-weight:normal;white-space:nowrap;text-align:center;">120</div>
<div style="position:absolute;left:373.6px;width:800px;top:1018.19px;line-height:13px;font-size:11px;color:#a8a8a8;font-weight:normal;white-space:nowrap;text-align:center;">132</div>
<div style="position:absolute;left:439.20000000000005px;width:800px;top:1018.19px;line-height:13px;font-size:11px;color:#a8a8a8;font-weight:normal;white-space:nowrap;text-align:center;">144</div>
<div style="position:absolute;left:504.9px;width:800px;top:1018.19px;line-height:13px;font-size:11px;color:#a8a8a8;font-weight:normal;white-space:nowrap;text-align:center;">156</div>
<div style="position:absolute;left:570.5px;width:800px;top:1018.19px;line-height:13px;font-size:11px;color:#a8a8a8;font-weight:normal;white-space:nowrap;text-align:center;">168</div>
<div style="position:absolute;left:636.2px;width:800px;top:1018.19px;line-height:13px;font-size:11px;color:#a8a8a8;font-weight:normal;white-space:nowrap;text-align:center;">180</div>
<div style="position:absolute;left:701.9000000000001px;width:800px;top:1018.19px;line-height:13px;font-size:11px;color:#a8a8a8;font-weight:normal;white-space:nowrap;text-align:center;">192</div>
<div style="position:absolute;left:767.5px;width:800px;top:1018.19px;line-height:13px;font-size:11px;color:#a8a8a8;font-weight:normal;white-space:nowrap;text-align:center;">204</div>
<div style="position:absolute;left:833.2px;width:800px;top:1018.19px;line-height:13px;font-size:11px;color:#a8a8a8;font-weight:normal;white-space:nowrap;text-align:center;">216</div>
<div style="position:absolute;left:898.8px;width:800px;top:1018.19px;line-height:13px;font-size:11px;color:#a8a8a8;font-weight:normal;white-space:nowrap;text-align:center;">228</div>
<div style="position:absolute;left:964.5px;width:800px;top:1018.19px;line-height:13px;font-size:11px;color:#a8a8a8;font-weight:normal;white-space:nowrap;text-align:center;">240</div>
<div style="position:absolute;left:1030.2px;width:800px;top:1018.19px;line-height:13px;font-size:11px;color:#a8a8a8;font-weight:normal;white-space:nowrap;text-align:center;">252</div>
<div style="position:absolute;left:-342.7px;width:800px;top:1017.99px;line-height:13px;font-size:11px;color:#f2f2f2;font-weight:bold;white-space:nowrap;text-align:center;">1</div>
<div style="position:absolute;right:12.5px;top:1061.94px;line-height:14px;font-size:12px;color:#a0a0a0;font-weight:normal;white-space:nowrap;text-align:right;">| 5.0.1</div>
</div></body></html>
